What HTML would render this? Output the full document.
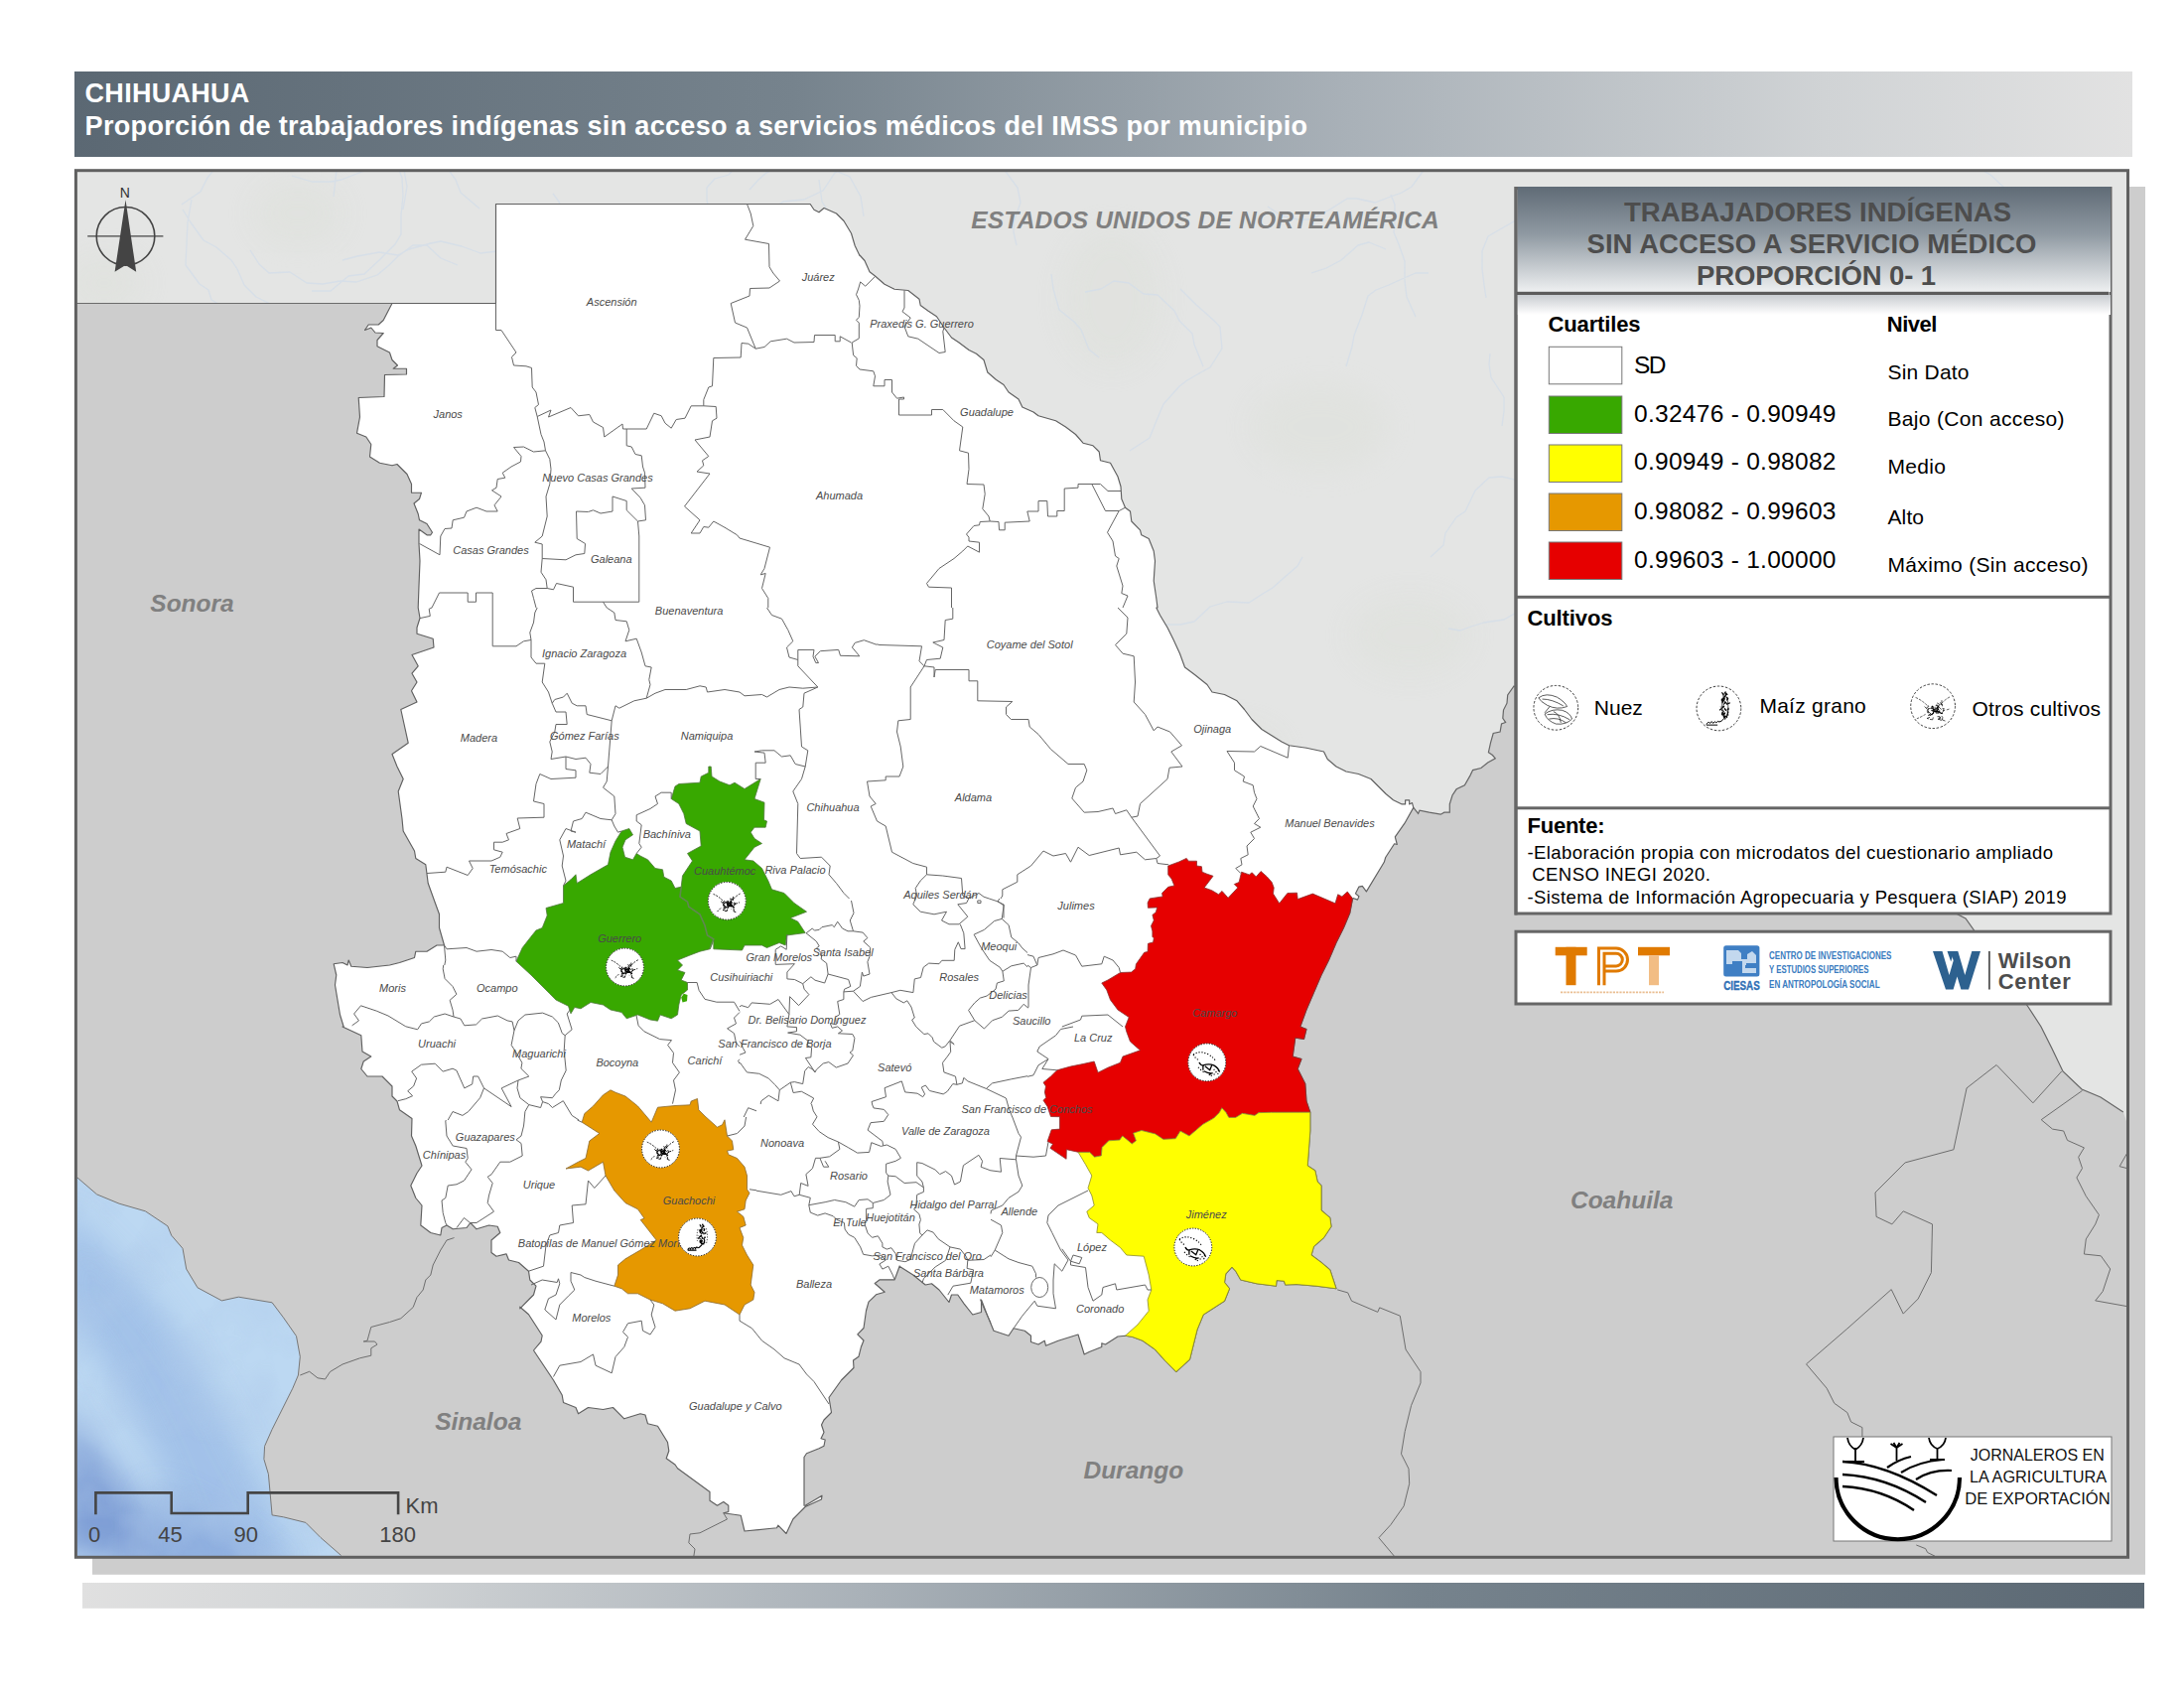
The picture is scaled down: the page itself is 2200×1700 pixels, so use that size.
<!DOCTYPE html><html><head><meta charset="utf-8"><title>Chihuahua</title>
<style>html,body{margin:0;padding:0;background:#fff}svg{display:block}text{font-family:"Liberation Sans",sans-serif}</style></head><body>
<svg width="2200" height="1700" viewBox="0 0 2200 1700">
<defs>
<linearGradient id="gh" x1="0" x2="1" y1="0" y2="0"><stop offset="0" stop-color="#5b6873"/><stop offset="0.35" stop-color="#76838d"/><stop offset="0.62" stop-color="#a9b1b8"/><stop offset="0.85" stop-color="#d0d3d5"/><stop offset="1" stop-color="#e2e2e2"/></linearGradient>
<linearGradient id="gf" x1="0" x2="1" y1="0" y2="0"><stop offset="0" stop-color="#e0e0e0"/><stop offset="0.15" stop-color="#d0d3d5"/><stop offset="0.38" stop-color="#a9b1b8"/><stop offset="0.65" stop-color="#76838d"/><stop offset="1" stop-color="#5b6873"/></linearGradient>
<linearGradient id="gl" x1="0" x2="0" y1="0" y2="1"><stop offset="0" stop-color="#5f6b76"/><stop offset="0.45" stop-color="#8f99a2"/><stop offset="1" stop-color="#eef0f1"/></linearGradient>
<linearGradient id="gl2" x1="0" x2="0" y1="0" y2="1"><stop offset="0" stop-color="#c9cdd1"/><stop offset="1" stop-color="#ffffff"/></linearGradient>
<radialGradient id="go" cx="0" cy="1" r="1" gradientUnits="objectBoundingBox"><stop offset="0" stop-color="#7d9fd0"/><stop offset="0.35" stop-color="#9dbde3"/><stop offset="0.75" stop-color="#b9d6f0"/><stop offset="1" stop-color="#c3dcf2"/></radialGradient>
<clipPath id="cm"><rect x="76" y="171" width="2068" height="1397"/></clipPath>
</defs>
<rect width="2200" height="1700" fill="#fff"/>
<rect x="75" y="72" width="2073" height="86" fill="url(#gh)"/>
<text x="85.6" y="103.3" font-size="27" font-weight="bold" fill="#fff" textLength="165.7" lengthAdjust="spacing">CHIHUAHUA</text>
<text x="85.6" y="136" font-size="27" font-weight="bold" fill="#fff" textLength="1231.4" lengthAdjust="spacing">Proporción de trabajadores indígenas sin acceso a servicios médicos del IMSS por municipio</text>
<rect x="93" y="188" width="2068" height="1397.8" fill="#cdcdcd"/>
<rect x="83" y="1594" width="2077" height="25.8" fill="url(#gf)"/>
<g clip-path="url(#cm)">
<rect x="76" y="171" width="2068" height="1397" fill="#cdcdcd"/>
<clipPath id="cus"><path d="M76 171 L2144 171 L2144 1135 L2138.8 1120 L2116 1105 L2097 1097 L2078 1079 L2067 1056 L2056 1034 L2043 1014 L1980 925 L1525 691 L1518.7 700 L1518 708.2 L1514.5 715.1 L1513.8 723.4 L1516.6 727.5 L1512.5 728.9 L1511.1 737.1 L1504.2 738.5 L1501.5 748.1 L1499.4 757.7 L1503.5 760.5 L1506.3 763.9 L1498.7 768 L1491.9 773.5 L1483.6 775.6 L1480.9 781.1 L1475.4 790.7 L1467.1 794.8 L1463 801 L1460.3 809.9 L1460.3 818.2 L1454.8 818.2 L1451.3 820.2 L1439.6 818.2 L1430 816.1 L1428.6 819.3 L1423.8 813.4 L1423.8 813.4 L1422.5 808.6 L1419.7 809.9 L1419.7 805.8 L1415.6 805.8 L1415.6 809.9 L1412.2 809.9 L1403.5 805.8 L1396 799.5 L1388.5 792 L1381 784.5 L1368.5 779.5 L1356 777 L1346 772 L1337.2 764.5 L1333.5 757 L1316 753.2 L1298.5 750.8 L1291 747 L1281 740.8 L1271 734.5 L1261 724.5 L1253.5 714.5 L1246 705.8 L1233.5 699.5 L1221 697 L1216 689.5 L1203.5 679.5 L1193.5 672 L1188.5 658.2 L1182.2 644.5 L1176 632 L1168.5 619.5 L1164.8 612 L1166 612 L1164.8 602.5 L1162.2 585 L1163.5 565 L1162.2 555 L1157.2 542.5 L1149.8 538.8 L1148.5 533.8 L1139.8 525 L1138.5 515 L1133.5 511.2 L1129.8 502.5 L1129 490 L1126 480 L1118.5 466.2 L1108.5 463.8 L1107.2 455 L1101 448.8 L1091 446.2 L1083.5 437.5 L1073.5 430 L1063.5 423.8 L1046 418.8 L1041 415 L1029.8 410 L1026 402 L1016 395 L1011 387.5 L1003.5 382.5 L994.8 375 L991 362.5 L983.5 356.2 L976 352.5 L966 345 L958.5 340 L951 330 L943.5 318.8 L934.8 313 L927.2 307.5 L926 301.2 L914.8 292.5 L901 291.2 L891 286.2 L881.5 278 L876 273.8 L871 262.5 L866 257 L866 257.5 L861.2 247.5 L857.5 235 L850 222.5 L842.5 215 L830 209.5 L825 213.8 L820 211.2 L816.2 205.5 L499.5 205.5 L499.5 305.5 L76 305.5Z"/></clipPath><clipPath id="coc"><path d="M76 1186 L78 1186 L97.6 1202.9 L120.1 1212.2 L146.4 1219.8 L168.9 1234.8 L172.7 1244.2 L184 1257.3 L187.7 1278 L199 1296.8 L223.4 1309.9 L240.3 1306.2 L274.1 1311.8 L285.4 1326.8 L298.5 1345.6 L302.3 1366.3 L300.4 1385 L294.8 1398.2 L285.4 1417 L274.1 1439.5 L266.6 1456.4 L265.9 1469.6 L270.4 1484.6 L274.1 1525.9 L285.4 1527.8 L307.9 1533.4 L323 1548.5 L343.6 1566.5 L344 1568 L76 1568Z"/></clipPath>
<path d="M76 171 L2144 171 L2144 1135 L2138.8 1120 L2116 1105 L2097 1097 L2078 1079 L2067 1056 L2056 1034 L2043 1014 L1980 925 L1525 691 L1518.7 700 L1518 708.2 L1514.5 715.1 L1513.8 723.4 L1516.6 727.5 L1512.5 728.9 L1511.1 737.1 L1504.2 738.5 L1501.5 748.1 L1499.4 757.7 L1503.5 760.5 L1506.3 763.9 L1498.7 768 L1491.9 773.5 L1483.6 775.6 L1480.9 781.1 L1475.4 790.7 L1467.1 794.8 L1463 801 L1460.3 809.9 L1460.3 818.2 L1454.8 818.2 L1451.3 820.2 L1439.6 818.2 L1430 816.1 L1428.6 819.3 L1423.8 813.4 L1423.8 813.4 L1422.5 808.6 L1419.7 809.9 L1419.7 805.8 L1415.6 805.8 L1415.6 809.9 L1412.2 809.9 L1403.5 805.8 L1396 799.5 L1388.5 792 L1381 784.5 L1368.5 779.5 L1356 777 L1346 772 L1337.2 764.5 L1333.5 757 L1316 753.2 L1298.5 750.8 L1291 747 L1281 740.8 L1271 734.5 L1261 724.5 L1253.5 714.5 L1246 705.8 L1233.5 699.5 L1221 697 L1216 689.5 L1203.5 679.5 L1193.5 672 L1188.5 658.2 L1182.2 644.5 L1176 632 L1168.5 619.5 L1164.8 612 L1166 612 L1164.8 602.5 L1162.2 585 L1163.5 565 L1162.2 555 L1157.2 542.5 L1149.8 538.8 L1148.5 533.8 L1139.8 525 L1138.5 515 L1133.5 511.2 L1129.8 502.5 L1129 490 L1126 480 L1118.5 466.2 L1108.5 463.8 L1107.2 455 L1101 448.8 L1091 446.2 L1083.5 437.5 L1073.5 430 L1063.5 423.8 L1046 418.8 L1041 415 L1029.8 410 L1026 402 L1016 395 L1011 387.5 L1003.5 382.5 L994.8 375 L991 362.5 L983.5 356.2 L976 352.5 L966 345 L958.5 340 L951 330 L943.5 318.8 L934.8 313 L927.2 307.5 L926 301.2 L914.8 292.5 L901 291.2 L891 286.2 L881.5 278 L876 273.8 L871 262.5 L866 257 L866 257.5 L861.2 247.5 L857.5 235 L850 222.5 L842.5 215 L830 209.5 L825 213.8 L820 211.2 L816.2 205.5 L499.5 205.5 L499.5 305.5 L76 305.5Z" fill="#e4e5e4"/>
<g clip-path="url(#cus)">
<filter id="bl" x="-50%" y="-50%" width="200%" height="200%"><feGaussianBlur stdDeviation="14"/></filter>
<ellipse cx="300" cy="215" rx="45" ry="35" fill="#dcdfd8" opacity=".4" filter="url(#bl)"/>
<ellipse cx="105" cy="285" rx="40" ry="30" fill="#dcdfd8" opacity=".4" filter="url(#bl)"/>
<ellipse cx="1330" cy="430" rx="70" ry="45" fill="#dcdfd8" opacity=".4" filter="url(#bl)"/>
<ellipse cx="1420" cy="640" rx="60" ry="40" fill="#dcdfd8" opacity=".4" filter="url(#bl)"/>
<ellipse cx="1120" cy="300" rx="50" ry="70" fill="#dcdfd8" opacity=".4" filter="url(#bl)"/>
<ellipse cx="1640" cy="330" rx="60" ry="40" fill="#dcdfd8" opacity=".4" filter="url(#bl)"/>
<ellipse cx="1250" cy="760" rx="40" ry="30" fill="#dcdfd8" opacity=".4" filter="url(#bl)"/>
<path d="M1401 196 L1405 206 L1405 224 L1404 234 L1409 246 L1415 263 L1415 283 L1417 299 L1426 319 M1646 307 L1632 326 L1628 337 L1632 358 L1633 379 L1629 396 L1616 405 L1598 417 L1578 425 L1558 431 M184 211 L192 224 L205 242 L218 249 L233 262 L239 271 L246 287 L258 299 L278 309 M1501 356 L1500 367 L1502 380 L1515 400 L1515 414 L1513 429 M1965 554 L1957 569 L1946 581 L1934 590 L1922 590 L1902 590 L1891 584 L1872 583 L1857 580 M1312 561 L1307 570 L1292 583 L1282 592 L1272 598 L1258 607 L1236 606 L1219 611 L1203 626 L1189 629 L1170 629 L1152 639 L1133 648 L1124 652 M755 191 L764 181 L772 174 L792 166 L809 171 L827 166 L839 171 L856 178 L867 198 L870 218 M1552 504 L1542 490 L1530 484 L1513 480 L1500 481 L1486 494 L1476 515 L1467 521 L1456 537 L1454 549 L1441 561 M1059 276 L1061 291 L1067 312 L1082 324 L1089 332 L1097 352 L1107 360 M1189 291 L1205 307 L1222 322 L1229 329 L1231 351 L1219 370 L1208 376 L1196 383 L1188 389 L1172 407 L1164 426 L1158 441 L1138 454 M1229 768 L1238 774 L1245 782 L1254 789 L1272 802 L1281 808 L1298 822 L1309 823 L1322 831 L1329 848 M1277 208 L1289 216 L1307 221 L1321 221 L1338 212 L1357 200 L1367 200 L1385 204 L1401 198 L1412 194 L1422 188 L1430 177 L1440 163 L1447 140 L1459 127 M1459 633 L1471 635 L1482 631 L1495 627 L1515 624 L1531 615 L1542 602 M1946 873 L1951 882 L1959 891 L1961 903 L1964 923 L1965 934 L1955 951 L1955 961 L1957 979 L1959 989 L1969 1010 L1967 1021 M824 258 L809 264 L797 267 L777 258 L766 240 L766 229 L771 216 L789 203 L810 201 L829 192 L841 174 L853 168 L869 167 L889 161 M557 195 L563 203 L568 217 L573 236 L570 251 L579 271 L592 283 L593 294 L593 309 L586 323 L576 329 M1934 332 L1955 322 L1974 315 L1993 315 L2004 312 L2018 313 L2040 307 L2054 308 L2069 305 L2083 300 L2093 288 L2112 283 M1941 683 L1931 693 L1923 712 L1915 725 L1907 742 L1898 761 L1879 770 L1866 774 L1847 774 L1828 787 L1819 798 L1809 804 L1799 826 L1788 844 M1024 247 L1021 234 L1021 224 L1028 204 L1025 189 L1011 170 L1005 161 L987 149 L969 138 L952 121 L938 103 L936 84 M1565 591 L1570 580 L1583 571 L1604 565 L1621 553 L1632 545 L1647 532 L1654 519 L1664 514 L1672 501 L1673 488 L1672 473 L1671 463 L1677 448 M1668 956 L1678 955 L1698 950 L1721 956 L1741 958 L1759 962 L1772 959 L1782 956 L1799 947 L1809 939 L1818 932 L1827 926 L1841 915 L1845 897 L1841 881 M193 201 L189 224 L188 246 L187 267 L201 286 L210 292 L213 302 L225 309 L234 325 L247 335 L270 338 L284 339 M846 295 L851 285 L848 271 L849 248 L847 228 L834 213 L828 203 L825 181 M1321 275 L1336 270 L1351 262 L1368 247 L1379 244 L1396 251 M1789 759 L1775 755 L1762 744 L1749 734 L1741 723 L1739 701 L1725 684 L1711 676 L1699 666 L1677 665 L1665 671 L1651 671 L1634 661 L1624 658 M2034 246 L2032 232 L2029 213 L2027 203 L2019 189 L2005 176 L1989 167 L1967 160 L1953 155 L1939 150 L1919 152 L1900 158 L1881 152 M483 210 L464 194 L459 181 L451 170 L447 158 L439 152 L417 144 L399 134 L389 134 L373 140 L353 152 L339 170 L338 180 L336 198 M1497 300 L1495 287 L1493 271 L1493 253 L1499 238 L1511 231 L1525 223 L1535 219 L1546 222 L1561 234 M633 242 L639 250 L651 264 L662 271 L675 285 L689 299 L694 320 L694 339 L685 352 L674 367 L654 375 L647 385 L640 404 L634 417 M345 262 L360 258 L382 254 L401 257 L412 251 L434 245 L444 243 L465 248 L484 255 L501 253 L515 251 L529 258 L543 278 L553 290 M748 261 L752 275 L745 295 L739 310 L737 324 L725 335 L708 351 L693 360 L683 368 L669 383 L653 396 L644 412 M1992 536 L1976 526 L1965 509 L1958 502 L1947 495 L1942 485 L1944 466 M406 211 L410 188 L407 171 L400 149 L393 128 L395 114 L404 101 L420 95 L434 96 L452 92 L467 100 L484 101 M798 243 L774 237 L759 239 L745 234 L728 232 L716 222 L712 201 L712 189 L720 180 L734 176 L749 160 M294 177 L314 183 L333 183 L344 181 L362 174 L384 165 L406 161 L423 158 M1356 369 L1362 349 L1364 338 L1372 317 L1378 298 L1386 292 L1399 287 L1410 282 L1426 275 L1439 275 M252 252 L261 266 L271 275 L292 274 L309 285 L325 286 L343 283 L359 284 L380 277 L392 267 L401 258 L416 247 L430 247 L444 260 L461 267 M1496 789 L1513 802 L1520 822 L1535 838 L1546 843 L1566 845 L1584 854 L1595 854 L1606 855 L1615 860 L1626 865 L1635 876 L1643 886 L1651 906 L1660 921 M649 289 L663 289 L684 277 L695 257 L713 246 L736 249 L749 257 L755 266 L763 279 L769 298 M1288 853 L1305 851 L1328 852 L1346 848 L1365 848 L1385 848 L1396 849 M183 206 L202 193 L209 179 L222 163 L238 159 L250 161 L261 161 M1093 294 L1109 291 L1122 283 L1137 285 L1152 296 L1166 297 L1183 313 L1188 323 L1201 336 L1203 347 L1212 369 M1703 344 L1704 331 L1713 319 L1715 297 L1703 278 L1693 273 L1681 271 L1671 267 L1651 274 L1640 283 L1635 293 L1623 305 L1608 312 L1591 313 M314 293 L333 293 L351 278 L367 276 L382 262 L398 246 L404 236 L404 217 L406 197 L405 179 L399 163 L390 143 L375 133 L367 117 M1864 530 L1874 517 L1880 507 L1888 489 L1891 478 L1899 470 L1910 467 L1923 452 L1940 445 L1957 440 L1967 435 L1982 422 M1628 891 L1627 876 L1628 863 L1632 851 L1626 830 L1617 811 L1610 791 L1614 768 L1624 752 L1631 745" fill="none" stroke="#d3dde8" stroke-width="1.3" stroke-linejoin="round" opacity=".8"/>
</g>
<path d="M76 1186 L78 1186 L97.6 1202.9 L120.1 1212.2 L146.4 1219.8 L168.9 1234.8 L172.7 1244.2 L184 1257.3 L187.7 1278 L199 1296.8 L223.4 1309.9 L240.3 1306.2 L274.1 1311.8 L285.4 1326.8 L298.5 1345.6 L302.3 1366.3 L300.4 1385 L294.8 1398.2 L285.4 1417 L274.1 1439.5 L266.6 1456.4 L265.9 1469.6 L270.4 1484.6 L274.1 1525.9 L285.4 1527.8 L307.9 1533.4 L323 1548.5 L343.6 1566.5 L344 1568 L76 1568Z" fill="#bcd8f2"/>
<g clip-path="url(#coc)"><filter id="bo" x="-50%" y="-50%" width="200%" height="200%"><feGaussianBlur stdDeviation="16"/></filter>
<path d="M60 1560 L60 1420 Q120 1480 200 1600 Z" fill="#7f9fd6" filter="url(#bo)"/>
<path d="M60 1215 Q150 1290 210 1400 Q260 1480 300 1580 L200 1590 Q170 1480 120 1400 Q90 1340 60 1320Z" fill="#9bbce6" opacity=".8" filter="url(#bo)"/>
<path d="M150 1500 Q220 1520 290 1590 L150 1590Z" fill="#88a9dc" opacity=".8" filter="url(#bo)"/>
<filter id="tb" x="0" y="0" width="100%" height="100%"><feTurbulence type="fractalNoise" baseFrequency="0.018" numOctaves="3" seed="5"/><feColorMatrix type="matrix" values="0 0 0 0 0.42  0 0 0 0 0.58  0 0 0 0 0.82  0 0 0 1.6 -0.62"/></filter>
<rect x="76" y="1180" width="280" height="390" filter="url(#tb)" opacity=".55"/>
</g>
<path d="M78 1186 L97.6 1202.9 L120.1 1212.2 L146.4 1219.8 L168.9 1234.8 L172.7 1244.2 L184 1257.3 L187.7 1278 L199 1296.8 L223.4 1309.9 L240.3 1306.2 L274.1 1311.8 L285.4 1326.8 L298.5 1345.6 L302.3 1366.3 L300.4 1385 L294.8 1398.2 L285.4 1417 L274.1 1439.5 L266.6 1456.4 L265.9 1469.6 L270.4 1484.6 L274.1 1525.9 L285.4 1527.8 L307.9 1533.4 L323 1548.5 L343.6 1566.5" fill="none" stroke="#777" stroke-width="1"/>
<path d="M76 305.5 H395" fill="none" stroke="#6b6b6b" stroke-width="1.2"/>
<path d="M2138.8 1120 L2116 1105 L2097 1097 L2078 1079 L2067 1056 L2056 1034 L2043 1014 L1980 925 L1525 691 L1518.7 700 L1518 708.2 L1514.5 715.1 L1513.8 723.4 L1516.6 727.5 L1512.5 728.9 L1511.1 737.1 L1504.2 738.5 L1501.5 748.1 L1499.4 757.7 L1503.5 760.5 L1506.3 763.9 L1498.7 768 L1491.9 773.5 L1483.6 775.6 L1480.9 781.1 L1475.4 790.7 L1467.1 794.8 L1463 801 L1460.3 809.9 L1460.3 818.2 L1454.8 818.2 L1451.3 820.2 L1439.6 818.2 L1430 816.1 L1428.6 819.3 L1423.8 813.4" fill="none" stroke="#666" stroke-width="1.2"/>
<path d="M457.5 1246.5 L456.2 1247 L450 1249 L443.8 1259 L436.2 1274 L433.8 1284 L428.8 1289 L426.2 1299 L420 1306.5 L416.2 1316.5 L403.8 1327.8 L392.5 1331.5 L373.8 1336.5 L370 1350.2 L366.2 1351 L377.5 1351 L380 1354 L373.8 1357.8 L373.8 1365.2 L362.5 1367.8 L345 1374 L332.5 1381.5 L327.5 1389 L320 1387.8 L311.7 1381.3 L302.3 1385" fill="none" stroke="#6e6e6e" stroke-width="1"/>
<path d="M728.8 1523.8 L732.5 1530 L705 1543.8 L695 1545 L693.8 1553.8 L700 1560 L698.8 1567.5" fill="none" stroke="#6e6e6e" stroke-width="1"/>
<path d="M1347.2 1298.9 L1357.7 1301.9 L1361.5 1310.2 L1387.8 1321.4 L1389.7 1316.9 L1410.3 1325.2 L1416 1359 L1431 1381.6 L1431 1392.8 L1421.6 1415.4 L1415.2 1441.7 L1411.5 1464.2 L1419 1479.2 L1419.7 1494.2 L1414.1 1516.8 L1400.9 1535.6 L1388.9 1548.7 L1404.7 1567.5" fill="none" stroke="#6e6e6e" stroke-width="1"/>
<path d="M2076.8 1078.9 L2047.9 1110.8 L2011.1 1072.5 L1981.1 1095.8 L1967.9 1157.8 L1919.1 1170.9 L1889 1201 L1890.1 1225.4 L1905.9 1232.9 L1917.2 1219.8 L1946.5 1232.9 L1945.4 1281.7 L1932.2 1308 L1917.2 1323.1 L1905.2 1298.6 L1860.8 1338.1 L1819.5 1373.8 L1840.2 1398.2 L1847.7 1413.2 L1860.8 1422.6 L1864.6 1432 L1875.9 1437.6 L1875.9 1447" fill="none" stroke="#6e6e6e" stroke-width="1"/>
<path d="M2097.5 1098.4 L2056.2 1127.7 L2067.5 1137.1 L2078.7 1139 L2082.5 1148.4 L2099.4 1155.9 L2093.7 1165.3 L2097.5 1176.6 L2091.9 1186 L2101.3 1204.7 L2114.4 1223.5 L2110.7 1232.9 L2101.3 1247.9 L2099.4 1263 L2116.3 1264.8 L2125.7 1278 L2118.2 1300.5 L2110.7 1309.9 L2142.6 1315.6" fill="none" stroke="#6e6e6e" stroke-width="1"/>
<path d="M2142.6 1161.5 L2135.1 1174.7 L2142.6 1176.6" fill="none" stroke="#6e6e6e" stroke-width="1"/>
<path d="M1930.3 1556 L1939.7 1559.7 L1941.6 1563.5 L1949.1 1567.2" fill="none" stroke="#6e6e6e" stroke-width="1"/>
<path d="M499.5 205.5 L816.2 205.5 L820 211.2 L825 213.8 L830 209.5 L842.5 215 L850 222.5 L857.5 235 L861.2 247.5 L866 257.5 L866 257 L871 262.5 L876 273.8 L881.5 278 L891 286.2 L901 291.2 L914.8 292.5 L926 301.2 L927.2 307.5 L934.8 313 L943.5 318.8 L951 330 L958.5 340 L966 345 L976 352.5 L983.5 356.2 L991 362.5 L994.8 375 L1003.5 382.5 L1011 387.5 L1016 395 L1026 402 L1029.8 410 L1041 415 L1046 418.8 L1063.5 423.8 L1073.5 430 L1083.5 437.5 L1091 446.2 L1101 448.8 L1107.2 455 L1108.5 463.8 L1118.5 466.2 L1126 480 L1129 490 L1129.8 502.5 L1133.5 511.2 L1138.5 515 L1139.8 525 L1148.5 533.8 L1149.8 538.8 L1157.2 542.5 L1162.2 555 L1163.5 565 L1162.2 585 L1164.8 602.5 L1166 612 L1164.8 612 L1168.5 619.5 L1176 632 L1182.2 644.5 L1188.5 658.2 L1193.5 672 L1203.5 679.5 L1216 689.5 L1221 697 L1233.5 699.5 L1246 705.8 L1253.5 714.5 L1261 724.5 L1271 734.5 L1281 740.8 L1291 747 L1298.5 750.8 L1316 753.2 L1333.5 757 L1337.2 764.5 L1346 772 L1356 777 L1368.5 779.5 L1381 784.5 L1388.5 792 L1396 799.5 L1403.5 805.8 L1412.2 809.9 L1415.6 809.9 L1415.6 805.8 L1419.7 805.8 L1419.7 809.9 L1422.5 808.6 L1423.8 813.4 L1414.9 829.2 L1405.3 842.9 L1407.3 850.5 L1404.6 849.8 L1395.7 863.5 L1394.3 868.3 L1376.4 897.9 L1372.3 892.4 L1368.9 893.1 L1365.4 899.9 L1368.9 902.7 L1367.5 906.1 L1363 904.5 L1362.2 907 L1359.8 919.5 L1353.5 934.5 L1346 949.5 L1338.5 967 L1331 982 L1323.5 999.5 L1316 1017 L1309.8 1034 L1316 1036.5 L1313.5 1046.5 L1304.8 1045.2 L1302.2 1064 L1311 1066.5 L1307.2 1076.5 L1314.8 1091.5 L1316 1109 L1319.8 1120.2 L1319.8 1139 L1317.2 1174 L1324.8 1179 L1327.2 1190.2 L1331 1194 L1331 1219 L1339.8 1226.5 L1341 1235.2 L1333.5 1246.5 L1323.5 1255.2 L1321 1264 L1331 1271.5 L1339.8 1279 L1346 1297.8 L1326 1295.2 L1306 1293.5 L1294.8 1294 L1293.5 1290.2 L1286 1289.5 L1285.5 1295.2 L1266 1292.8 L1249.8 1289 L1244.8 1280.2 L1241 1276 L1234.8 1282.8 L1233.5 1291.5 L1238.5 1297.8 L1233.5 1310.2 L1212.2 1324 L1206 1339 L1198.5 1369 L1184.8 1381.5 L1173.5 1370.2 L1163.5 1359 L1151 1350.2 L1141 1346.5 L1133.5 1345.2 L1126 1346 L1113.5 1354 L1109.8 1352.8 L1109.8 1356.5 L1097.2 1361.5 L1092.2 1364 L1086 1344 L1066 1350.2 L1053.5 1355.2 L1052.2 1350.2 L1046 1354 L1038.5 1351.5 L1038.5 1345.2 L1032.2 1340.2 L1021 1337.8 L1016 1345.2 L1001 1340.2 L994.8 1325.2 L988.5 1309 L988.5 1321.5 L979.8 1324 L971 1312.8 L964.8 1304 L958.5 1304 L956 1311.5 L946 1299 L938.5 1292.8 L932.2 1294 L919.8 1284 L906 1275.2 L906.2 1275 L901.2 1288.8 L886.2 1288.8 L881.2 1292.5 L891.2 1301.2 L882.5 1303.8 L875 1311.2 L872.5 1320 L870 1337.5 L863.8 1343.8 L870 1350 L867.5 1356.2 L865 1366.2 L859.5 1370 L860 1377.5 L847.5 1390 L835 1407.5 L837.5 1422.5 L830 1430 L827.5 1435 L830 1442.5 L827 1448.8 L831.2 1450 L830 1456.2 L825 1458.8 L812.5 1463.8 L810 1467.5 L810 1516.2 L811.2 1516.2 L828 1506.2 L827.5 1510 L811.2 1517.5 L798.8 1530 L792 1544.5 L783.8 1536.2 L782.5 1538.8 L775 1539.5 L750 1542 L746.2 1526.2 L728.8 1523.8 L733.8 1522.5 L733.8 1516.2 L728.8 1512.5 L722.5 1516.2 L715 1511.2 L715 1502.5 L682.5 1478.8 L680 1475 L671.2 1468.8 L673.8 1461.2 L672.5 1452.5 L662.5 1436.2 L652.5 1433.8 L650 1425 L645 1423.8 L628.8 1428.8 L617.5 1417.5 L607.5 1419.5 L592.5 1417.5 L582.5 1423.8 L580 1417.5 L567.5 1412.5 L566.2 1405 L557.5 1390 L537.5 1360 L545 1351.2 L546.2 1345 L532.5 1323.8 L523.8 1316.2 L523.8 1317.8 L532.5 1309 L537.5 1304 L540 1295.2 L533.8 1289 L532.5 1280.2 L522.5 1271.5 L512.5 1269 L510 1262.8 L500 1265.2 L495 1261.5 L495 1249 L503.8 1241.5 L501.2 1235.2 L492.5 1234 L480 1237.8 L473.8 1231.5 L470 1236.5 L456.2 1237.8 L450 1234 L445 1236.5 L443.8 1244 L433.8 1241.5 L423.8 1234 L425 1214 L418.8 1206.5 L413.8 1194 L420 1181.5 L425 1174 L418.8 1154 L414.5 1144 L415 1126.5 L402.5 1117.8 L400 1109 L395 1104 L395 1094 L385 1084 L370 1084 L363.8 1076.5 L366.2 1069 L373.8 1064 L365 1059 L363.8 1042.8 L345 1034 L346.2 1034 L342.5 1022 L340 1007 L337.5 992 L338.8 982 L336.2 970.8 L345 969.5 L350 972 L351.2 967 L353.8 973.2 L370 974.5 L392.5 972 L402.5 969.5 L417.5 964.5 L418.8 958.2 L430 958.2 L440 952 L447.5 952 L442.5 934.5 L442.5 920.8 L437.5 907 L431.2 889.5 L428.8 870.8 L418.8 864.5 L417.5 857 L406.2 837 L405 824.5 L401.2 797 L406.2 784.5 L400 772 L395 759.5 L411.2 748.2 L403.8 714.5 L420 707 L414.5 695.8 L420 687 L415 678.2 L421.2 670.8 L415 659.5 L437 652 L436.2 643.2 L420 638.2 L420 632 L423 622.5 L421.2 612 L421.2 612 L422 590 L423 565 L422 547.5 L422 533 L430 538.8 L433.8 538.8 L435.5 536.2 L430 527.5 L422.5 523.8 L421.2 517.5 L417 507 L422.5 502.5 L424.5 496.2 L414.5 496.2 L414.5 487.5 L410 477.5 L400 467.5 L395 468.8 L382.5 466.2 L372.5 460 L373.8 447.5 L368.8 440 L359.5 436.2 L362.5 420 L361.2 400.5 L387 399.5 L387.5 377.5 L409.5 377 L409.5 371.2 L396.2 371.2 L400.5 368 L395 362.5 L392.5 355 L380 348.8 L380 342.5 L386.2 335.5 L378 335 L373.8 330 L367.5 332.5 L371.2 327 L381.2 327 L386.2 322.5 L395 305.5 L499.5 305.5Z" fill="#fff" stroke="#606060" stroke-width="1.15" stroke-linejoin="round"/>
<path d="M1176.7 872 L1187.7 867.9 L1195.2 864.4 L1197.3 867.2 L1205.5 867.2 L1205.5 872 L1210.4 872.7 L1211 878.2 L1215.9 880.2 L1222 882.3 L1213.1 894 L1220.7 896.7 L1227.5 900.8 L1231 897.4 L1237.1 904.3 L1246.8 894 L1243.3 890.5 L1248.1 888.5 L1250.6 878.2 L1258.4 880.9 L1261.2 878.8 L1265.3 883 L1270.1 877.5 L1276.3 883 L1281.1 888.5 L1283.2 894 L1282.5 900.1 L1288.7 909.8 L1296.9 899.5 L1306.5 899.2 L1307.2 905.6 L1322.3 900.1 L1345 909.8 L1347.7 900.8 L1351.8 902.9 L1357.3 898.1 L1362.1 904.3 L1362.2 907 L1359.8 919.5 L1353.5 934.5 L1346 949.5 L1338.5 967 L1331 982 L1323.5 999.5 L1316 1017 L1309.8 1034 L1316 1036.5 L1313.5 1046.5 L1304.8 1045.2 L1302.2 1064 L1311 1066.5 L1307.2 1076.5 L1314.8 1091.5 L1316 1109 L1319.8 1120.2 L1280.4 1120.3 L1268 1120.6 L1263.9 1123.4 L1251.5 1121.3 L1244.7 1125.4 L1237.8 1125.4 L1235.1 1120.6 L1230.9 1115.8 L1228.2 1120.6 L1222.7 1126.1 L1211.7 1132.3 L1198 1144 L1189 1139.1 L1184.2 1146.7 L1171.9 1147.4 L1163.6 1141.9 L1149.9 1138.5 L1141.6 1141.2 L1144.4 1148.8 L1140.3 1151.9 L1130.7 1144 L1127.9 1148.1 L1116.9 1148.8 L1110.1 1155.6 L1109.4 1163.9 L1102.5 1165.2 L1097.7 1160.4 L1086.7 1160.4 L1074.3 1157.7 L1074.1 1167.3 L1057.9 1156.3 L1060.6 1152.2 L1055.1 1149.5 L1059.2 1137.8 L1067.5 1137.1 L1067.5 1124.7 L1058.5 1124.5 L1055.1 1114.4 L1051 1108.2 L1053.7 1105.5 L1052.4 1100 L1053.5 1094 L1051 1090.2 L1058.5 1084 L1064.8 1077.8 L1078.5 1074 L1091 1071.5 L1102.2 1069 L1106 1080.2 L1116 1075.2 L1128.5 1070.2 L1131 1064 L1148.5 1057.8 L1138.5 1049 L1134.8 1039 L1133.5 1034 L1137.2 1024.5 L1126 1017 L1118.5 1007 L1114.8 997 L1109.8 990 L1116 987 L1128.5 979.5 L1139.6 979.1 L1143.7 975.7 L1144.4 970.9 L1152.7 959.2 L1156.1 958.5 L1156.4 950.3 L1161.6 948.9 L1162.3 944.8 L1160.9 943.4 L1160.9 937.9 L1159.5 932.4 L1162.3 926.9 L1160.9 921.4 L1164.3 918.7 L1165.7 913.9 L1156.4 914.3 L1156.1 909.1 L1158.2 904.9 L1171.2 902.9 L1170.5 899.5 L1176.7 893.3 L1182.9 891.9 L1180.1 885 L1176.7 880.9Z" fill="#e60000" stroke="#8a3030" stroke-width="0.8"/>
<path d="M1319.8 1120.2 L1319.8 1139 L1317.2 1174 L1324.8 1179 L1327.2 1190.2 L1331 1194 L1331 1219 L1339.8 1226.5 L1341 1235.2 L1333.5 1246.5 L1323.5 1255.2 L1321 1264 L1331 1271.5 L1339.8 1279 L1346 1297.8 L1326 1295.2 L1306 1293.5 L1294.8 1294 L1293.5 1290.2 L1286 1289.5 L1285.5 1295.2 L1266 1292.8 L1249.8 1289 L1244.8 1280.2 L1241 1276 L1234.8 1282.8 L1233.5 1291.5 L1238.5 1297.8 L1233.5 1310.2 L1212.2 1324 L1206 1339 L1198.5 1369 L1184.8 1381.5 L1173.5 1370.2 L1163.5 1359 L1151 1350.2 L1141 1346.5 L1133.5 1345.2 L1146 1334 L1157.2 1320.2 L1156 1309 L1159.8 1299 L1157.2 1284 L1152.2 1265.2 L1134.8 1264 L1128.5 1256.5 L1118.5 1249 L1109.8 1241.5 L1104.8 1241.5 L1106 1232.8 L1097.2 1226.5 L1094.8 1220.2 L1102.2 1214 L1099.8 1204 L1096 1196.5 L1099.8 1184 L1093.5 1172.8 L1086 1160.2 L1086.7 1160.4 L1097.7 1160.4 L1102.5 1165.2 L1109.4 1163.9 L1110.1 1155.6 L1116.9 1148.8 L1127.9 1148.1 L1130.7 1144 L1140.3 1151.9 L1144.4 1148.8 L1141.6 1141.2 L1149.9 1138.5 L1163.6 1141.9 L1171.9 1147.4 L1184.2 1146.7 L1189 1139.1 L1198 1144 L1211.7 1132.3 L1222.7 1126.1 L1228.2 1120.6 L1230.9 1115.8 L1235.1 1120.6 L1237.8 1125.4 L1244.7 1125.4 L1251.5 1121.3 L1263.9 1123.4 L1268 1120.6 L1280.4 1120.3Z" fill="#ffff00" stroke="#8a8a30" stroke-width="0.8"/>
<path d="M626.2 837 L633.8 834.5 L637.5 840.8 L630 845.8 L627 853.2 L629.5 863.2 L637.5 865.8 L641.2 859.5 L645 862 L652.5 865.8 L660 874.5 L667.5 875.8 L668.8 883.2 L676.2 887 L680 894.5 L686.2 893.2 L685 903.2 L692.5 908.2 L693.8 913.2 L705 920.8 L710 932 L712.5 942 L718.8 945.8 L715 955.8 L705 958.2 L695 962 L682.5 967 L687.5 972 L682.5 977 L690 979.5 L686.2 987 L692.5 989.5 L692.5 997 L686.2 1002 L683.8 1012 L682.5 1022 L676.2 1025.8 L665 1022 L662.5 1028.2 L655 1027 L642.5 1022 L631.2 1025.8 L626.2 1019.5 L615 1017 L607.5 1012 L595 1009.5 L585 1015.8 L578.8 1014.5 L575 1020.8 L572.5 1013.2 L560 1007 L553.8 1000.8 L545 992 L535 982 L520 968.2 L526.2 954.5 L535 943.2 L540 937 L546.2 934.5 L551.2 922 L550 914.5 L567.5 909.5 L567.5 892 L575 885.8 L580 880.8 L581.2 889.5 L595 880.8 L612.5 870.8 L615 858.2 L620 847Z" fill="#38a800" stroke="#4e7a3a" stroke-width="0.8"/>
<path d="M688.8 1000.8 L692.5 1002 L692 1008.2 L687.5 1009.5 L686.2 1004.5Z" fill="#38a800"/>
<path d="M713.8 772 L716.2 772 L717 782 L725 787 L735 790.8 L740 788.2 L750 794.5 L766.2 784.5 L760 804.5 L770 808.2 L769.5 825.8 L772.5 827 L771.2 833.2 L760 833.2 L756.2 838.2 L760 844.5 L767.5 849.5 L760 853.2 L750 865.8 L758.8 867 L767.5 874.5 L773.8 887 L777.5 895.8 L790 899.5 L800 909.5 L812.5 918.2 L796.2 924.5 L803.8 928.2 L811.2 939.5 L792.5 942 L791.2 952 L785 949.5 L772.5 954.5 L767.5 952 L750 952 L747.5 957 L718.8 955.8 L718.8 945.8 L712.5 942 L710 932 L705 920.8 L693.8 913.2 L692.5 908.2 L685 903.2 L686.2 893.2 L687.5 882 L697.5 867 L692.5 859.5 L706.2 852 L705 837 L691.2 829.5 L688.8 819.5 L683.8 809.5 L676.2 804.5 L680 792 L683.8 789.5 L705 788.2 L706.2 782 L713.8 778.2Z" fill="#38a800" stroke="#4e7a3a" stroke-width="0.8"/>
<path d="M686.2 893.2 L685 903.2 L692.5 908.2 L693.8 913.2 L705 920.8 L710 932 L712.5 942 L718.8 945.8 L715 955.8" fill="none" stroke="#5f8a4e" stroke-width="1.6"/>
<path d="M615 1097.8 L620 1100.2 L630 1104 L642.5 1114 L656.2 1130.2 L662.5 1115.2 L680 1113.5 L695 1112.8 L696.2 1109 L702.5 1106.5 L703.8 1117.8 L710 1124 L722.5 1135.2 L727.5 1132.8 L730 1127.8 L732.5 1144 L737.5 1149 L738.8 1157.8 L732.5 1159 L733.8 1162.8 L742.5 1166.5 L750 1175.2 L752.5 1184 L752.5 1197.8 L755 1201.5 L751.2 1209 L750 1217.8 L742.5 1220.2 L748.8 1225.2 L751.2 1234 L745 1236.5 L748.8 1246.5 L747.5 1254 L752.5 1264 L758.8 1274 L756.2 1294 L760 1301.5 L758.8 1309 L750 1314 L745 1324 L730 1314 L710 1310.2 L695 1317.8 L680 1320.2 L667.5 1312.8 L655 1309 L642.5 1302.8 L632.5 1302.8 L626.2 1297.8 L618.8 1295.2 L622.5 1284 L622.5 1274 L630 1267.8 L645 1259 L661.2 1249 L645.2 1228.5 L649 1227 L642.5 1217.8 L630 1211.5 L618.8 1199 L610 1184 L607.5 1170.2 L592.5 1179 L585 1175.2 L570 1177 L582.5 1170.2 L590 1166.5 L593.8 1149 L603.8 1141.5 L586.2 1130.2 L588.8 1121.5 L597.5 1114 L607.5 1102.8Z" fill="#e69800" stroke="#8a6a30" stroke-width="0.8"/>
<path d="M499.5 305.5 L499.5 332.5 L505 332.5 L520 355 L515.5 359.5 L517.5 368 L530 368.8 L535.5 370.5 L536.2 390 L540 395 L542.5 407.5 L538.8 410.5 L541.2 419.5 M541.2 419.5 L555 413 L552.5 420 L575 410.5 L582.5 418.8 L593.8 417.5 L597.5 425 L607.5 430.5 L608.8 440 L627 427 L627.5 432 L651.2 432 L658.8 416.2 L666.2 418.8 L670 426.2 L676.2 431.2 L681.2 422.5 L690 421.2 L696.2 408.8 L708.8 408.8 L708.8 402.5 L713.8 390 L717.5 388.8 L718.8 360.5 L746.2 360 L747 345.5 L753.8 346.2 L761.2 351.2 L752.5 330 L740.5 325 L736.2 305.5 L755 298 L755.5 290.5 L775 290 L785.5 283 L778.8 275 L775 268.8 L774.5 245.5 L750.5 241.2 L758.8 227.5 L756.2 215 L752.5 205.5 M761.2 351.2 L770 349.5 L776.2 343.8 L792.5 341.2 L800 345 L820 344.5 L820.5 337.5 L841.2 337.5 L841.2 343.8 L846.2 343.8 L846.2 338.8 L857.5 345 M708.8 408.8 L721.2 409.5 L722 421.2 L717.5 423.8 L715 440 L700 443 L713.8 459.5 L707.5 463.8 L708.8 468.8 L702 475 L715 477 L689.5 510 L705 523.8 L696.2 537 L705 537 L708.8 530.5 L713.8 531.2 L718.8 525 L730 531.2 L742.5 538.8 L745 542 L755 545 L775.5 551.2 L770 572.5 L766.2 578.8 L771.2 577.5 L767.5 592.5 L773.8 602.5 L773.8 612 M541.2 419.5 L545 437.5 L548 445 L549.5 453.8 L553.8 462.5 L555 472.5 L553.8 487.5 L550 500 L551.2 520 L546.2 540 L538.8 546.2 L546.2 548 L546.2 562.5 L545 576.2 L550 583.8 L551.2 592.5 M549.5 453.8 L537.5 455 L527.5 450 L517.5 450.5 L525 459.5 L524.5 465 L515 470 L506.2 476.2 L508.8 481.2 L501.2 482.5 L500 491.2 L495.5 493.8 L505 500 L498 508.8 L501.2 515 L490 515 L480 511.2 L470 515 L467.5 521.2 L456.2 523.8 L455 532 L448 532.5 L443.8 540 L443 558.8 L422.5 547.5 M631.2 432 L631.2 448.8 L636.2 450 L640 457.5 L646.2 458.8 L647.5 470 L649.5 476.2 L650 491.2 L636.2 492 L645 501.2 L649.5 508.8 L650.5 523.8 L642.5 525 L631.2 513.8 L631.2 504.5 L617 500 L617 515 L605 517 L597.5 513.8 L592.5 515.5 L580.5 515 L581.2 542.5 L589.5 547.5 L588.8 557.5 L580 558.8 L570 563.8 L546.2 562.5 M642.5 525 L643.8 540 L643.8 606.2 L577.5 606.2 L577.5 591.2 L560.5 587.5 L557.5 593.8 L551.2 592.5 L540 592.5 L535.5 595 L537.5 602.5 L540 612 M423 622.6 L433.3 620.4 L432.2 613.3 L435 612 L442.5 597 L471.2 597 L471.2 606.2 L479.5 606.2 L479.5 597 L496.2 597 L496.2 612 M607.5 606.2 L611.2 612 M881.7 278.2 L871.7 288.2 L866.7 283.9 L864.6 291 L862.5 296.7 L865.3 302.4 L866 308.1 L865.3 319.4 L862.5 322.3 L865.3 325.1 L865.3 340.8 L858.2 345 L859.6 357.8 L863.2 360.7 L862.5 368.5 L866 372 M911 292.5 L911 310 L909 313.8 L917.2 320 L911 328.8 L914.8 338.8 L924.8 341.2 L946 355.5 L952.2 354.5 L949.8 333.8 L951 330 M866 372 L879.8 373.8 L881.5 378.8 L879.8 388.8 L891 388.8 L891 382.5 L898.5 382.5 L898.5 395 L903.5 401.2 L910.5 400 L910.5 402 L905.5 402 L905.5 418 L938.5 418 L938.5 412.5 L949.8 412.5 L961 423.8 L969.8 430 L966.5 453.8 L975.5 456.2 L976 472.5 L974 487.5 L991 488 L992.2 497.5 L989.8 512.5 L996 520 L997.2 525 L987.2 525.5 L986.5 528.8 L981 529.5 L973.5 538 L976 541.2 L976 545 L986.5 546.2 L986.5 556.2 L974.8 550 L969.8 555 L961 562.5 L946 572.5 L933.5 587.5 L935.5 591.2 L958.5 592 L958.5 612 M997.2 525 L1006 525.5 L1006.5 533.8 L1012.2 533.8 L1012.2 526.2 L1037.2 525 L1034.8 515 L1046 515 L1046 504.5 L1054.8 504.5 L1055.5 520 L1064.8 520 L1064.8 514.5 L1072.2 514.5 L1072.2 492 L1086 491.2 L1086 487.5 L1108.5 487.5 L1116 494.5 L1129 494.5 M1099.8 487.5 L1113.5 514.5 L1127.2 514.5 L1115.5 536.2 L1121 545 L1123.5 560 L1127.2 562.5 L1124.8 570 L1131 590 L1129.8 597.5 L1136 600 L1131 612 M1127.2 514.5 L1133.5 511.2 M496.2 612 L496.2 650.8 L520 650.8 L527.5 645.8 L535 644.5 L533.8 637 L537.5 627 L538.8 617 L541.2 612 M535 644.5 L535 662 L540 668.2 L548.8 668.2 L546.2 687 L552.5 697 L556.2 708.2 L558.8 704.5 L567.5 702 L571.2 698.2 L576.2 708.2 L581.2 710.8 L590 710.8 L591.2 719.5 L616.2 725.8 M611.2 612 L618.8 617 L620 624.5 L631.2 625.8 L633.8 634.5 L630 645.8 L641.2 643.2 L646.2 657 L650 670.8 L656.2 672 L653.8 684.5 L655 689.5 L651.2 703.2 M616.2 725.8 L620 710.8 L623.8 713.2 L638.8 705.8 L651.2 703.2 L660 698.2 L670 694.5 L691.2 694.5 L705 690.8 L711.2 692 L712.5 697 L730 694.5 L745 697 L750 700.8 L767.5 699.5 L772.5 702 L785 694.5 L795 692 L808.8 693.2 L823.8 692 M772.5 612 L777.5 619.5 L787.5 623.2 L793.8 634.5 L798.8 645.8 L792.5 652 L795 662 L803.8 664.5 L803.8 654.5 L820 654.4 L819 661.2 L821.8 667.6 L824.5 667.6 L820.9 661.2 L826.4 655.7 L844.7 654.4 L846.5 660.3 L865.8 660.8 L858.4 652 L861.2 647.4 L870.3 644.7 L883.2 649.3 M803.8 664.5 L803.8 670.8 L823.8 692 L810 698.2 L808.8 712 L805 714.5 L806.2 732 L807.5 752 L813.8 755.8 L811.2 772 L807.5 784.5 L798.8 797 L803.8 809.5 L802.5 859.5 L806.2 864.5 L827.5 863.2 L836.2 872 L835 880.8 L842.5 889.5 L850 899.5 L855.5 905 M766.2 784.5 L761.2 784.5 L761.2 768.2 L771.2 768.2 L770 758.2 L760 757 L767.5 755.8 L780 755.8 L787.5 762 L796.2 760.8 L801.2 769.5 L811.2 772 M556.2 708.2 L560 717 L570 717 L571.2 729.5 L560 729.5 L558.8 737 L553.8 747 L556.2 757 L555 764.5 L570 762 L580 764.5 L590 763.2 L595 769.5 L593.8 778.2 L605 779.5 L612.5 772 M570 762 L570 774.5 L580 775.8 L580 783.2 L555 784.5 L543.8 779.5 L540 789.5 L537.5 807 L548 809.5 L548 823.2 L521.2 824 L523.8 834.5 L510 839.5 L512.5 845.8 L506.2 848.2 L497.5 848.2 L497.5 855.8 L506.2 858.2 L503.8 863.2 L495 867 L472.5 867 L476.2 874.5 L471.2 881.5 L450 873.2 L448.8 878.2 L430 879.5 M616.2 725.8 L612.5 772 L611.2 787 L607.5 793.2 L618.8 802 L620 819.5 L616.2 825.8 L605 824.5 L590 818.2 L586.2 824.5 L577.5 827 L575 837 L580 838.2 L570 834.5 L563.8 845.8 L567.5 862 L566.2 872 L570 887 L567.5 892 M616.2 825.8 L618.8 832 L622.5 838.2 L626.2 837 M676.2 804.5 L676.2 798.2 L666.2 798.2 L660 802 L662.5 809.5 L655 814.5 L641.2 820.8 L641.2 827 L646.2 830.8 L643.8 849.5 L646.2 853.2 L641.2 859.5 M447.5 952 L450 955.8 L470 954.5 L480 958.2 L495 956.5 L506.2 958.2 L513.8 964.5 L520 963.2 L520 968.2 M447.5 952 L448.8 967 L447.8 972 M959.8 612 L959.8 623.2 L952.2 624.5 L951 644.5 L939.8 647 L949.8 652 L947.2 663.2 L933.5 664.5 L931 670.8 M883.2 648.8 L886 649.5 L928.5 650.8 L926 665.8 L931 670.8 L917.2 692 L917.2 724.5 L904.8 725.8 L903.5 737 L907.2 752 L909.8 772 L906 782 L892.2 782 L892.2 785.8 L873.5 787 L876 802 L882.2 809.5 L877.2 812 L883.5 827 L892.2 832 L898.5 858.2 L919.8 869.5 L933.5 873.2 L933.5 880.8 M931 670.8 L941 672 L941 682 L942.2 674.5 L976 674.5 L976 685.8 L984.8 685.8 L984.8 705.8 L1019.8 706.5 L1013.5 712 L1013.5 719.5 L1018.5 724.5 L1036 724.5 L1037.2 732 L1046 739.5 L1058.5 754.5 L1076 769.5 L1092.2 769.5 L1094.8 775.8 L1091 787 L1083.5 793.2 L1079.8 804 L1092.2 818.2 L1106 817.5 L1121 814 L1123.5 819.5 L1134.8 815.8 L1139.8 823.2 M1126 612 L1136 622 L1134.8 638.2 L1123.5 649.5 L1131 658.2 L1142.2 660.8 L1143.5 687 L1142.2 707 L1153.5 719.5 L1162.2 735.8 L1166 732 L1178.5 737 L1190.5 750.8 L1179.8 757 L1191 772 L1178 773.2 L1176 784.5 L1148.5 809.5 L1146 822 L1139.8 823.2 L1168.5 862 L1164.8 864.5 L1166 869.5 L1177.2 870.8 M1164.8 864.5 L1153.5 865.8 L1144.8 858.2 L1128.5 860.8 L1127.2 854 L1097.2 861.5 L1086 853.2 L1078.5 868.2 L1073.5 859.5 L1061 862 L1051 857 L1038.5 872 L1024.8 880.8 L1024.8 888.2 L1009.8 895.8 L1009.8 902 L1008 905 M1298.5 750.8 L1297.2 763.2 L1269.8 751.5 L1263.5 757 L1236 756.5 L1243.5 768.2 L1243.5 775.8 L1253.5 782 L1252.2 787 L1262.2 790.8 L1263.5 798.2 L1266 804.5 L1262.2 812 L1268.5 824.5 L1263.5 829.5 L1269.8 833.2 L1259.8 838.2 L1263.5 844.5 L1256 852 L1257.2 860.8 L1249.8 864.5 L1251 870.8 L1244.8 874.5 L1249.8 879.5 M933.5 880.8 L927.2 887 L922.2 894.5 L923.5 902 L922.2 905 M975.8 905 L976 904.5 L969.8 902 L968.5 884.5 L949.8 882 L933.5 880.8 M976 904.5 L986 899.5 L991 903.2 L996.4 905 M1035 972.2 L1038.5 974.5 L1044.8 972 L1041 963.2 L1035 961.6 M1044.8 972 L1046 964.5 L1061 960.8 L1071 957 L1083.5 962 L1089.8 973.2 L1109.8 970.8 L1112.2 963.2 L1121 967 L1127.2 974.5 L1128.5 979.5 M1038.5 974.5 L1036 992 L1036 1014.5 L1035 1015 M1069.8 1034 L1088.5 1027 L1089.8 1023.2 L1116 1022 L1131 1034 M449.4 1128 L448.8 1129 L450 1144 L456.2 1154 L470 1156.5 L471.2 1166.5 L468.8 1170.2 L475 1177.8 L467.5 1189 L460 1192.8 L451.2 1194 L448.8 1206.5 L445 1209 L446.2 1221.5 L448.8 1231.5 L450 1234 M525 1144 L520 1147.8 L525 1151.5 L526.2 1164 L513.8 1170.2 L503.8 1170.2 L495 1182.8 L491.2 1185.2 L496.2 1191.5 L492.5 1204 L491.2 1211.5 L497.5 1220.2 L480 1231.5 L473.8 1231.5 M460 1236.5 L467.5 1226.5 L475 1232.8 M581.6 1128 L586.2 1130.2 M528.2 1128 L527.5 1134 L525 1144 M751.6 1125 L750 1134 L742.5 1141.5 L732.5 1144 M762 1198.8 L755 1197.8 M745 1324 L745 1330.2 L757.5 1337.8 L767.5 1350.2 L780 1359 L790 1367.8 L805 1374 L812.5 1384 L820 1391.5 L835 1414 M610 1184 L598.8 1196.5 L592.5 1189 L590 1212.8 L576.2 1214 L577.5 1231.5 L563.8 1234 L562.5 1241.5 L553.8 1244 L550 1254 L547.5 1275.2 L532.5 1280.2 M535 1294 L546.2 1289 L561.2 1291.5 L562.5 1287.8 L563.8 1292.8 L560 1304 L552.5 1307.8 L548.8 1319 L560 1329 L563.8 1314 L572.5 1305.2 L578.8 1299 L575 1290.2 L575 1281.5 L585 1284 L588.8 1286.5 L600 1290.2 L618.8 1295.2 M655 1309 L658.8 1314 L656.2 1324 L660 1336.5 L655 1344 L647.5 1340.2 L646.2 1330.2 L632.5 1332.8 L627.5 1341.5 L632.5 1346.5 L628.8 1356.5 L620 1366.5 L616.2 1382.8 L600 1375.2 L597.5 1364 L585 1371.5 L563.8 1375.2 L557.5 1386.5 M1064.8 1077.8 L1049.8 1076.5 L1056 1066.5 L1044.8 1059 L1047.2 1054 L1063.5 1042.8 L1068.5 1036.5 L1081 1034 M1035 1084.3 L1041 1082.8 L1046 1072.8 L1056 1066.5 M1019.8 1125 L1026 1141.5 L1028.5 1145.2 L1023.5 1164 L1041 1165.2 L1053.5 1164 L1056 1150.2 M998 1178.8 L1008.5 1180.2 L1007.2 1166.5 L1023.5 1167.8 L1023.5 1164 M998 1265.8 L1002.2 1259 M1023.5 1167.8 L1026 1184 L1029.8 1194 L1026 1200.2 L1016 1206.5 L1009.8 1214 L998.5 1219 L998 1222.4 M998 1228.2 L1008.5 1234 L1009.8 1241.5 L1002.2 1259 L1016 1267.8 L1026 1271.5 L1039.8 1275.2 L1043.5 1282.8 L1043.5 1286.5 M1096 1199 L1066 1214 L1056 1224 L1054.8 1231.5 L1059.8 1241.5 L1068.5 1259 L1076 1269 L1069.8 1280.2 L1062.2 1272.8 L1061 1289 L1061 1302.8 L1063.5 1317.8 L1044.8 1315.2 L1042.2 1310.2 L1029.8 1325.2 L1021 1337.8 M1069.8 1257.8 L1078.5 1270.2 L1087.2 1272.8 L1089.8 1266.5 L1081 1264 L1078.5 1270.2 L1078.5 1274 L1093.5 1276.5 L1096 1296.5 L1101 1310.2 L1109.8 1304 L1111 1296.5 L1123.5 1292.8 L1124.8 1299 L1153.5 1294 L1156 1299 L1159.8 1299 M857.5 907 L860 919.5 L856.25 927 L859.5 937.8 L869.1 939.1 L873.9 944.6 L869.8 948.1 L876.7 954.3 L876 963.2 L873.9 968.7 L876 981 L869.8 983.1 L868.4 979 L866.4 993.4 L859.5 998.2 M812.1 939.8 L818.3 935 L820.4 937.1 L825.2 936.4 L827.9 933.7 L838.2 931.6 L840.3 933.7 L843.7 928.2 L848.5 935 L854 937.8 L859.5 937.8 M812.1 939.8 L822.4 948.1 L825.2 952.9 L822.4 954.9 L827.9 960.4 L827.2 965.9 L832.7 970.1 L834.1 981 L854.7 986.5 L856.8 993.4 L850.6 996.2 L849.9 998.9 L859.5 998.2 M849.9 998.9 L849.9 1006.5 L843.7 1008.5 L845.8 1021.6 L841.6 1024.3 L842.3 1031.9 L836.2 1030.5 L838.2 1035.3 L843.7 1033.9 L848.5 1038 L844.4 1040.8 L858.8 1041.5 L860.9 1045.6 L858.8 1058 L856.1 1060 L859.5 1062.8 L854 1071 L842.3 1075.1 L834.8 1069.6 L829.3 1071 L822.4 1077.2 L821 1079.9 L811.4 1065.5 L816.9 1064.8 L817.6 1055.2 L812.8 1052.5 L814.2 1048.4 L805.9 1042.2 L793.6 1040.1 L802.5 1038.7 L802.5 1034.6 L792.9 1033.9 L794.9 1021.6 M792.9 941.2 L792.2 956.3 L786.7 952.9 L781.2 956.3 L781.2 971.4 L800.4 970.7 L792.9 979 L792.9 985.9 L800.4 986.5 L808.7 990.7 L816.9 983.8 L821 987.2 L830.7 990 L834.1 981 M808.7 990.7 L810.1 996.2 L814.9 1001.6 L804.6 1012.6 L795.6 1003.7 L794.9 1021.6 L784 1006.5 L775.7 1011.3 L757.2 1009.9 L753.7 1014.7 L746.9 1012.6 L745 1013.8 M859.5 998.2 L869.1 1008.5 L877.4 1004.4 L898 999.6 L906.9 997.3 L919.9 999.6 L921.3 985.9 L927.5 984.5 L930.2 974.2 L935.7 970.1 L946 970.7 L948.8 967.3 L961.2 967.3 L961.8 956.3 L965.3 948.8 L968 955.6 L972.1 955.6 L970.8 939.8 L967.3 930.9 M898 999.6 L902.8 1005.8 L910.3 1009.9 L913.8 1007.8 L917.9 1014 L921.3 1025 L918.6 1027.1 L922.7 1033.9 L930.9 1041.5 L935.1 1040.8 L939.2 1044.9 L940.5 1049 L948.8 1055.2 L952.2 1053.8 L957 1047.7 L961.2 1051.8 L957 1049 L957.7 1059.3 L954.3 1064.1 L949.5 1070.3 L950.9 1079.9 L962.5 1084.1 L963.9 1092.3 L969.4 1090.9 L970.8 1085.4 L974.9 1088.9 L993.4 1096.4 L1013.4 1106 L1016.1 1115.7 L1019.7 1125 M957 1047.7 L966.6 1033.2 L981.8 1027.7 L991.4 1036 L999.6 1027.7 L1009.2 1024.3 L1016.1 1018.1 L1025.7 1017.4 L1031.2 1011.3 L1035 1014.5 M981.8 1027.7 L975.6 1017.4 L981.8 1009.9 L987.3 1005.1 L994.1 1003 L1003 996.2 L1004.4 990 L1011.3 987.9 L1009.9 978.3 L1007.2 974.2 L996.9 967.3 L991.4 959.1 L988.6 954.9 L981.1 941.2 L991.4 936.4 L1001.7 927.5 L1009.2 925.4 L1016.1 931.6 L1018.8 944 L1025.7 949.5 L1029.8 954.9 L1035 959.5 M1009.9 978.3 L1018.8 972.8 L1031.2 970.1 L1035 973.9 M1009.2 925.4 L1011.3 911 L1005.1 908.2 L1006.7 905 M993.4 1096.4 L999.6 1090.9 L1018.8 1086.8 L1035 1083.7 M963.9 1092.3 L959.8 1091.6 L954.3 1099.2 L950.2 1101.9 L936.4 1098.5 L932.3 1093 L928.2 1095.1 L931.6 1101.9 L929.6 1104.7 L924.1 1101.2 L911.7 1099.9 L908.3 1088.9 L891.1 1095.7 L892.5 1104.7 L878 1109.5 L878.7 1112 M821 1079.9 L819 1077.2 L814.2 1074.5 L810.7 1078.6 L808.7 1091.6 L800.4 1089.6 L796.3 1090.2 L785.3 1097.8 L780.5 1092.3 L774.3 1086.1 L764.7 1081.3 L752.4 1079.9 L745.5 1070.3 L745 1069.8 M796.3 1090.2 L799.1 1100.5 L807.3 1099.2 L819.7 1106 L816.9 1111.5 L817 1112 M785.3 1097.8 L784 1108.8 L774.3 1103.3 L766.8 1108.8 L766.2 1112 M762 1118.8 L753.7 1115.7 L749.2 1125 M745 1048.6 L746.9 1051.1 L748.2 1055.2 L751 1060 L745.5 1062.1 L745 1062.2 M922.2 905 L919.8 910.8 L927.2 918.2 L941 920.8 L953.5 918.2 L948.5 927 L956 930.8 L966 930.8 L974.8 923.2 L964.8 910.8 L973.5 909.5 L975.8 905 M996.4 905 L1006 908.2 L1011 912 L1011 924.5 M984.8 907 L988 907 L988 909.5 L984.8 909.5 L984.8 907 M817.5 1112 L819.3 1118.9 L823 1124.8 L818.5 1132.2 L825.2 1139.6 L834.1 1145.6 L844.4 1150 L845.9 1157.4 L835.6 1164.8 L825.9 1166.3 L821.5 1166.3 L818.5 1176.7 L811.9 1182.6 L814.1 1194.4 L806.7 1191.5 L805.2 1203.3 L800 1204.8 L797 1199.6 L786.7 1203.3 L762 1199.2 M831.1 1169.3 L834.8 1175.2 L829.6 1175.2 L825.9 1166.3 M844.4 1150 L854.8 1155.9 L863.7 1161.1 L875.6 1160.4 L877.8 1150.7 L887.4 1154.4 L893.3 1153 L902.2 1157.4 L907.4 1166.3 L902.2 1169.3 L892.6 1172.2 L892.6 1181.1 L894.8 1184.1 L894.1 1190 L897 1203.3 L890.4 1208.5 L879.3 1211.5 M878.5 1112 L880 1115.9 L890.4 1117.4 L894.8 1122.6 L890.4 1129.3 L877 1130.7 L874.1 1138.1 L888.9 1149.3 L889.6 1153.7 M805.2 1203.3 L816.3 1206.3 L814.8 1213.7 L831.1 1210.7 L840.7 1208.5 L851.9 1210.7 L860.7 1215.2 L865.2 1208.5 L874.1 1207.8 L879.3 1211.5 M814.8 1213.7 L816.3 1221.1 L823.7 1224.1 L831.1 1221.9 L839.3 1224.8 L843 1228.5 L850.4 1231.5 L851.1 1238.1 L854.8 1243.3 L860.7 1246.3 L866.7 1255.9 L869.6 1263.3 L878.5 1264.8 L887.4 1264.1 L891.9 1269.3 L885.9 1273 L888.9 1278.1 L894.8 1275.2 L899.3 1284.1 L900.7 1287.8 M879.3 1211.5 L879.3 1216.7 L872.6 1217.4 L872.6 1228.5 L871.1 1233 L874.1 1241.9 L878.5 1246.3 L884.4 1244.8 L888.9 1252.2 L888.9 1255.9 L893.3 1258.1 L897.8 1256.7 L902.2 1262.6 L903.7 1269.3 L911.9 1270.7 L917 1268.5 M894.8 1184.1 L902.2 1184.8 L911.1 1191.5 L923 1190.7 L930.4 1195.9 L930.4 1200.4 L923.7 1203.3 L923 1213.7 L920.7 1218.1 L925.9 1222.6 L927.4 1228.5 L925.9 1233 L926.7 1241.9 L928.9 1244.1 L934.1 1238.9 L940 1241.1 L945.2 1247.8 L957 1255.9 L967.4 1258.1 L973.3 1265.6 L974.8 1269.3 M928.9 1244.1 L921.5 1252.2 L917 1268.5 M923.7 1184.1 L923.7 1170.7 L928.9 1171.5 L942.2 1178.1 L946.7 1182.6 L952.6 1179.6 L958.5 1184.1 L961.5 1193 L967.4 1190 L970.4 1173.7 L985.9 1163.3 L989.6 1169.3 L988.1 1175.2 L998 1178.9 M923.7 1184.1 L928.9 1190 L930.4 1195.9 M957 1255.9 L952.6 1269.3 L942.2 1275.9 L930.4 1287.8 L928.9 1292.2 M974.8 1269.3 L974.1 1277.4 L980.7 1278.9 L977.8 1292.2 L960 1295.2 L954.8 1304.1 M974.8 1269.3 L991.1 1268.5 L998 1263.9 M987.4 1308.5 L991.1 1317.4 L998 1332.4 M446.7 972 L446.2 975.8 L448.1 985.6 L456 993.5 L459.9 1001.3 L453.1 1007.3 L456 1017.1 L457 1024 M354.6 1032.8 L361.5 1027.9 L356.6 1021 L363.5 1012.8 L379.2 1018.1 L391 1023 L408.8 1033.8 L420.6 1036.8 L424.5 1030.9 L432.4 1028.9 L437.3 1024 L448.1 1021 L457 1024 L463.9 1026 L467.8 1032.8 L479.6 1031.9 L485.5 1026 L501.3 1023 L511.1 1027.9 L516.1 1028.9 L518 1037.8 M518 1037.8 L522 1027.9 L528.9 1022 L546.6 1020.1 L556.4 1024 L562.3 1029.9 L566.3 1040.7 L569.2 1042.7 L568.2 1058.4 L570.2 1078.1 L565.3 1088 L563.3 1097.8 L559.4 1101.8 L556.4 1105.7 L544.6 1104.7 L546.6 1109.6 L552.5 1111.6 L556.4 1115.5 L567.3 1108.7 L576.1 1123.4 L583.1 1128 M518 1037.8 L515.1 1052.5 L519 1058.4 L525.9 1070.3 L524.9 1076.2 L532.8 1084 L522 1088 L521 1095.9 L523.9 1105.7 L532.8 1112.6 L544.6 1115.5 L546.6 1109.6 M522 1088 L505.2 1095.9 L515.1 1114.6 L487.5 1095.9 L481.6 1084 L476.7 1084 L475.7 1091.9 L467.8 1095.9 L459.9 1078.1 L456 1076.2 L446.2 1079.1 L438.3 1071.2 L424.5 1072.2 L414.7 1079.1 L419.6 1086 L416.6 1093.9 L410.7 1098.8 L415.6 1103.7 L408.8 1106.7 L400.9 1108.7 M487.5 1095.9 L483.6 1105.7 L471.8 1119.5 L465.9 1123.4 L456 1119.5 L451.2 1128 M532.8 1112.6 L528.9 1119.5 L528.1 1128 M569.2 1042.7 L576.1 1036.8 L571.2 1021 L574.1 1017.1 M641.1 1023 L643.1 1032.8 L649 1038.8 L664.7 1046.6 L676.5 1047.6 L672.6 1052.5 L678.5 1060.4 L677.5 1070.3 L684.4 1080.1 L678.5 1088 L680.5 1097.8 L677.5 1111.6 M692.3 989.5 L702.1 989.5 L704.1 997.4 L710 1006.3 L721.8 1009.2 L739.5 1009.2 L745 1018.4 M745 1019.5 L739.5 1025 L741.5 1030.9 L732.6 1035.8 L739.5 1040.7 L741.5 1050.6 L745 1054.1 M745 1066.8 L743.5 1068.3 L745 1071.3" fill="none" stroke="#666" stroke-width="1" stroke-linejoin="round"/>
<ellipse cx="1047.2" cy="1296.5" rx="8.5" ry="10" fill="none" stroke="#666" stroke-width="1"/>
<text x="616.2" y="308.3" font-size="11" font-style="italic" fill="#4a4a4a" text-anchor="middle">Ascensión</text>
<text x="824.2" y="282.8" font-size="11" font-style="italic" fill="#4a4a4a" text-anchor="middle">Juárez</text>
<text x="451.2" y="421.3" font-size="11" font-style="italic" fill="#4a4a4a" text-anchor="middle">Janos</text>
<text x="602" y="484.6" font-size="11" font-style="italic" fill="#4a4a4a" text-anchor="middle">Nuevo Casas Grandes</text>
<text x="494.5" y="558.3" font-size="11" font-style="italic" fill="#4a4a4a" text-anchor="middle">Casas Grandes</text>
<text x="615.8" y="566.6" font-size="11" font-style="italic" fill="#4a4a4a" text-anchor="middle">Galeana</text>
<text x="845.5" y="502.8" font-size="11" font-style="italic" fill="#4a4a4a" text-anchor="middle">Ahumada</text>
<text x="928.5" y="330.3" font-size="11" font-style="italic" fill="#4a4a4a" text-anchor="middle">Praxedis G. Guerrero</text>
<text x="994" y="419.0" font-size="11" font-style="italic" fill="#4a4a4a" text-anchor="middle">Guadalupe</text>
<text x="694.1" y="619.1" font-size="11" font-style="italic" fill="#4a4a4a" text-anchor="middle">Buenaventura</text>
<text x="588.5" y="661.6" font-size="11" font-style="italic" fill="#4a4a4a" text-anchor="middle">Ignacio Zaragoza</text>
<text x="482.5" y="746.6" font-size="11" font-style="italic" fill="#4a4a4a" text-anchor="middle">Madera</text>
<text x="588.8" y="745.3" font-size="11" font-style="italic" fill="#4a4a4a" text-anchor="middle">Gómez Farías</text>
<text x="712" y="745.3" font-size="11" font-style="italic" fill="#4a4a4a" text-anchor="middle">Namiquipa</text>
<text x="839" y="817.3" font-size="11" font-style="italic" fill="#4a4a4a" text-anchor="middle">Chihuahua</text>
<text x="671.8" y="844.0" font-size="11" font-style="italic" fill="#4a4a4a" text-anchor="middle">Bachíniva</text>
<text x="590.5" y="854.0" font-size="11" font-style="italic" fill="#4a4a4a" text-anchor="middle">Matachí</text>
<text x="521.8" y="879.0" font-size="11" font-style="italic" fill="#4a4a4a" text-anchor="middle">Temósachic</text>
<text x="730.2" y="880.8" font-size="11" font-style="italic" fill="#4a4a4a" text-anchor="middle">Cuauhtémoc</text>
<text x="801" y="879.8" font-size="11" font-style="italic" fill="#4a4a4a" text-anchor="middle">Riva Palacio</text>
<text x="624.2" y="948.6" font-size="11" font-style="italic" fill="#4a4a4a" text-anchor="middle">Guerrero</text>
<text x="784.8" y="967.8" font-size="11" font-style="italic" fill="#4a4a4a" text-anchor="middle">Gran Morelos</text>
<text x="849" y="962.8" font-size="11" font-style="italic" fill="#4a4a4a" text-anchor="middle">Santa Isabel</text>
<text x="746.8" y="987.8" font-size="11" font-style="italic" fill="#4a4a4a" text-anchor="middle">Cusihuiriachi</text>
<text x="395.5" y="999.0" font-size="11" font-style="italic" fill="#4a4a4a" text-anchor="middle">Moris</text>
<text x="500.8" y="999.0" font-size="11" font-style="italic" fill="#4a4a4a" text-anchor="middle">Ocampo</text>
<text x="813" y="1030.8" font-size="11" font-style="italic" fill="#4a4a4a" text-anchor="middle">Dr. Belisario Domínguez</text>
<text x="1037.2" y="653.3" font-size="11" font-style="italic" fill="#4a4a4a" text-anchor="middle">Coyame del Sotol</text>
<text x="1221.2" y="738.3" font-size="11" font-style="italic" fill="#4a4a4a" text-anchor="middle">Ojinaga</text>
<text x="980.5" y="807.3" font-size="11" font-style="italic" fill="#4a4a4a" text-anchor="middle">Aldama</text>
<text x="1339.5" y="833.3" font-size="11" font-style="italic" fill="#4a4a4a" text-anchor="middle">Manuel Benavides</text>
<text x="947.5" y="905.3" font-size="11" font-style="italic" fill="#4a4a4a" text-anchor="middle">Aquiles Serdán</text>
<text x="1084" y="916.0" font-size="11" font-style="italic" fill="#4a4a4a" text-anchor="middle">Julimes</text>
<text x="1006.2" y="957.3" font-size="11" font-style="italic" fill="#4a4a4a" text-anchor="middle">Meoqui</text>
<text x="966.2" y="988.3" font-size="11" font-style="italic" fill="#4a4a4a" text-anchor="middle">Rosales</text>
<text x="1015.5" y="1006.0" font-size="11" font-style="italic" fill="#4a4a4a" text-anchor="middle">Delicias</text>
<text x="1039.2" y="1032.3" font-size="11" font-style="italic" fill="#4a4a4a" text-anchor="middle">Saucillo</text>
<text x="1223.8" y="1024.0" font-size="11" font-style="italic" fill="#4a4a4a" text-anchor="middle">Camargo</text>
<text x="440" y="1055.3" font-size="11" font-style="italic" fill="#4a4a4a" text-anchor="middle">Uruachi</text>
<text x="543" y="1065.3" font-size="11" font-style="italic" fill="#4a4a4a" text-anchor="middle">Maguarichi</text>
<text x="621.8" y="1073.6" font-size="11" font-style="italic" fill="#4a4a4a" text-anchor="middle">Bocoyna</text>
<text x="710" y="1072.3" font-size="11" font-style="italic" fill="#4a4a4a" text-anchor="middle">Carichí</text>
<text x="780.5" y="1055.3" font-size="11" font-style="italic" fill="#4a4a4a" text-anchor="middle">San Francisco de Borja</text>
<text x="488.8" y="1149.3" font-size="11" font-style="italic" fill="#4a4a4a" text-anchor="middle">Guazapares</text>
<text x="447.5" y="1167.3" font-size="11" font-style="italic" fill="#4a4a4a" text-anchor="middle">Chínipas</text>
<text x="788" y="1155.3" font-size="11" font-style="italic" fill="#4a4a4a" text-anchor="middle">Nonoava</text>
<text x="855" y="1187.8" font-size="11" font-style="italic" fill="#4a4a4a" text-anchor="middle">Rosario</text>
<text x="543" y="1197.3" font-size="11" font-style="italic" fill="#4a4a4a" text-anchor="middle">Urique</text>
<text x="694" y="1212.8" font-size="11" font-style="italic" fill="#4a4a4a" text-anchor="middle">Guachochi</text>
<text x="856" y="1234.8" font-size="11" font-style="italic" fill="#4a4a4a" text-anchor="middle">El Tule</text>
<text x="606.5" y="1256.0" font-size="11" font-style="italic" fill="#4a4a4a" text-anchor="middle">Batopilas de Manuel Gómez Morín</text>
<text x="820" y="1296.8" font-size="11" font-style="italic" fill="#4a4a4a" text-anchor="middle">Balleza</text>
<text x="595.8" y="1330.6" font-size="11" font-style="italic" fill="#4a4a4a" text-anchor="middle">Morelos</text>
<text x="740.8" y="1419.8" font-size="11" font-style="italic" fill="#4a4a4a" text-anchor="middle">Guadalupe y Calvo</text>
<text x="1101.2" y="1049.3" font-size="11" font-style="italic" fill="#4a4a4a" text-anchor="middle">La Cruz</text>
<text x="901.2" y="1079.3" font-size="11" font-style="italic" fill="#4a4a4a" text-anchor="middle">Satevó</text>
<text x="1034.5" y="1121.0" font-size="11" font-style="italic" fill="#4a4a4a" text-anchor="middle">San Francisco de Conchos</text>
<text x="952.5" y="1143.0" font-size="11" font-style="italic" fill="#4a4a4a" text-anchor="middle">Valle de Zaragoza</text>
<text x="960.2" y="1216.8" font-size="11" font-style="italic" fill="#4a4a4a" text-anchor="middle">Hidalgo del Parral</text>
<text x="1026.8" y="1224.0" font-size="11" font-style="italic" fill="#4a4a4a" text-anchor="middle">Allende</text>
<text x="897" y="1229.8" font-size="11" font-style="italic" fill="#4a4a4a" text-anchor="middle">Huejotitán</text>
<text x="1215.2" y="1227.3" font-size="11" font-style="italic" fill="#4a4a4a" text-anchor="middle">Jiménez</text>
<text x="1100" y="1259.8" font-size="11" font-style="italic" fill="#4a4a4a" text-anchor="middle">López</text>
<text x="934.2" y="1268.6" font-size="11" font-style="italic" fill="#4a4a4a" text-anchor="middle">San Francisco del Oro</text>
<text x="955.5" y="1286.0" font-size="11" font-style="italic" fill="#4a4a4a" text-anchor="middle">Santa Bárbara</text>
<text x="1004.2" y="1302.8" font-size="11" font-style="italic" fill="#4a4a4a" text-anchor="middle">Matamoros</text>
<text x="1108.2" y="1321.8" font-size="11" font-style="italic" fill="#4a4a4a" text-anchor="middle">Coronado</text>
<text x="193.5" y="616.4" font-size="24.5" font-style="italic" font-weight="bold" fill="#808080" text-anchor="middle">Sonora</text>
<text x="481.7" y="1439.5" font-size="24.5" font-style="italic" font-weight="bold" fill="#808080" text-anchor="middle">Sinaloa</text>
<text x="1141.8" y="1488.6" font-size="24.5" font-style="italic" font-weight="bold" fill="#808080" text-anchor="middle">Durango</text>
<text x="1633.7" y="1217" font-size="24.5" font-style="italic" font-weight="bold" fill="#808080" text-anchor="middle">Coahuila</text>
<text x="1214" y="229.5" font-size="24.5" font-style="italic" font-weight="bold" fill="#808080" text-anchor="middle" textLength="471.5" lengthAdjust="spacing">ESTADOS UNIDOS DE NORTEAMÉRICA</text>
<symbol id="map-n" viewBox="-20 -20 40 40" overflow="visible"><circle r="19.6" fill="#fff"/><circle r="19.3" fill="none" stroke="#000" stroke-width="1" stroke-dasharray="1.3 1.5"/><path d="M-14 -8 Q-8 -12.5 1 -8.5 Q7.5 -4.5 9 -1 M-14 -8 Q-12 -4 -8 -2" fill="none" stroke="#000" stroke-width="1.2" stroke-dasharray="1.2 1.8"/><path d="M-8 0 Q-7 3 -3 3.5 M-4 3 Q2 1 7 3 Q12 6 13 10 M-4 3 L-4 8 M-2 4 L3 8 L5 3 M-3 9 Q2 12 6 11 M2 13 L5 11" fill="none" stroke="#000" stroke-width="1.3"/><path d="M-9 5 L-6 8 L-2 11 M7 7 L11 12 M8 12 L4 14 M12 8 L11 13" fill="none" stroke="#000" stroke-width="1.2" stroke-dasharray="1.2 2"/></symbol>
<symbol id="map-o" viewBox="-20 -20 40 40" overflow="visible"><circle r="19.6" fill="#fff"/><circle r="19.3" fill="none" stroke="#000" stroke-width="1" stroke-dasharray="1.3 1.5"/><path d="M-14 -7 Q-9 -5 -4 0 M13.5 -7.4 Q9 -5 6 -1 M-10 11 L-6 7 M9 3 L13 1.5" fill="none" stroke="#000" stroke-width="0.9" stroke-dasharray="2 1.2"/><path d="M0.8 5.2 L-1.6 6.8 L-3.7 7.3 L-1.5 5.8 M5.4 5.3 L3.2 4.9 M2.7 1.7 L3.4 2.1 M6.5 5.1 L9.0 2.7 M3.9 0.9 L4.1 1.3 M-3.4 1.4 L-2.9 2.1 M-1.6 6.6 L-1.3 7.2 M-3.0 3.4 L-3.2 5.6 L-3.9 4.3 M4.4 8.4 L4.8 8.5 M5.9 -0.5 L6.5 -2.7 L6.5 -4.5 M-1.9 8.5 L-4.3 9.4 L-2.9 9.8 M4.3 1.0 L3.5 1.0 L5.0 -1.2 L2.9 -2.4 M1.4 2.1 L2.4 2.9 L5.0 4.5 L3.8 4.0 M1.4 2.7 L0.7 3.3 L0.7 1.8 M0.4 8.6 L-0.1 10.5 L-2.3 10.2 M-4.4 1.5 L-2.5 0.3 L-2.9 -0.4 M6.9 -0.9 L4.7 -2.7 M1.5 2.9 L-0.1 1.8 L-2.0 2.0 L-1.4 1.0 M6.3 7.5 L7.1 8.8 L6.9 10.7 L9.2 11.6 M-2.0 1.9 L-4.0 2.6 L-6.3 0.4 M2.4 5.4 L2.9 3.3 L3.3 3.5 M6.8 1.8 L8.7 2.4 M3.6 5.6 L4.2 5.5 L2.2 5.4 M6.3 2.7 L4.1 0.6 L3.3 -0.6 M2.9 1.4 L1.4 3.7 M-1.8 7.3 L-0.5 6.2 M0.8 2.1 L0.9 4.2 L0.1 2.8 M-2.7 2.2 L-4.1 3.8 L-1.6 5.6 L-0.0 7.3 M1.6 0.6 L1.6 1.8 L4.1 3.3 L4.0 1.8 M-1.1 1.2 L1.4 3.6 L0.7 2.1 L-0.7 0.5" fill="none" stroke="#000" stroke-width="0.95" stroke-linejoin="round"/><path d="M1.6 4.9 L1.5 6.2 L0.3 7.3 M1.4 4.5 L-0.0 3.8 M6.6 6.1 L7.1 6.5 L6.7 6.3 L7.6 6.9 M1.8 1.2 L0.2 0.1 M4.0 4.5 L3.4 4.9 L2.3 3.9 M4.0 4.2 L3.8 3.4 M7.5 3.9 L8.2 3.3 M4.2 6.1 L4.4 4.7 M5.3 5.3 L6.9 6.6 M5.4 4.0 L5.3 5.7 M3.4 4.6 L2.3 5.2 L1.7 4.5 L-0.0 4.2 M4.9 3.4 L3.5 1.8 L4.6 0.6 L4.8 0.4" fill="none" stroke="#000" stroke-width="1.4" stroke-linejoin="round"/></symbol>
<symbol id="map-m" viewBox="-20 -20 40 40" overflow="visible"><circle r="19.6" fill="#fff"/><circle r="19.3" fill="none" stroke="#000" stroke-width="1" stroke-dasharray="1.3 1.5"/><path d="M5.0 -7.6 L4.6 -7.2 M2.1 0.3 L0.6 1.5 M3.3 -7.2 L4.8 -7.3 M4.7 4.6 L5.1 3.4 M7.1 0.5 L7.1 1.4 M2.2 1.3 L3.1 1.6 M2.0 -6.3 L3.1 -6.4 M6.9 2.2 L7.6 3.8 M6.8 -4.4 L6.6 -2.8 M3.4 5.5 L2.2 4.5 M4.7 7.3 L5.1 6.6 M4.0 -2.1 L3.6 -1.8 M7.4 -0.5 L8.0 1.0 M6.7 5.1 L7.3 3.8 M6.6 5.1 L7.9 5.4 M3.2 2.1 L4.3 2.4 M2.2 -6.7 L3.3 -4.9 M6.0 -10.7 L5.7 -11.9 M6.4 -6.5 L7.6 -8.1 M2.0 0.1 L2.7 -0.5 M6.5 5.6 L6.5 7.4 M2.2 -6.2 L2.5 -7.8 M4.3 -8.5 L4.7 -9.7 M5.9 -11.6 L5.3 -10.0 M4.4 5.9 L4.3 6.0 M5.4 0.7 L5.6 1.1 M4.8 6.8 L4.6 7.6 M3.7 -7.6 L5.2 -7.6 M1.6 -1.3 L1.4 -1.0 M5.1 -12.1 L5.5 -13.7 M4.6 0.4 L5.2 -0.2 M6.1 2.0 L4.6 0.4 M7.5 1.4 L6.7 1.2 M3.7 -0.4 L3.2 -1.0 M5.4 -4.9 L4.8 -5.4 M2.4 3.3 L2.7 4.2 M3.1 -6.1 L4.1 -7.1 M4.5 -8.7 L5.1 -10.1 M3.8 -5.9 L4.8 -6.1 M3.5 5.0 L3.0 5.6 M4.6 5.6 L3.8 4.3 M2.8 -1.6 L3.8 -0.4 M3.7 -8.7 L4.7 -8.2 M4.1 4.0 L2.9 3.3 M3.7 3.8 L3.2 3.5 M4.2 -3.9 L5.6 -5.1 M5.8 -12.4 L7.0 -10.7 M7.8 -3.6 L9.1 -4.6 M6.6 2.8 L7.1 2.9 M3.8 -6.6 L3.0 -8.1 M3.4 -0.4 L4.4 -2.1 M5.4 6.0 L6.8 7.5 M5.0 5.9 L3.5 6.8 M3.8 -9.0 L4.3 -8.9 M7.7 -4.0 L8.0 -4.6 M6.9 -7.3 L6.8 -6.3 M2.9 -5.3 L3.0 -4.1 M6.2 -9.0 L7.6 -7.9 M2.6 4.4 L3.1 5.7 M4.1 -11.5 L3.3 -11.4 M4.6 -3.8 L5.5 -5.6 M3.6 -11.4 L2.4 -12.9 M5.3 7.5 L4.0 7.5 M3.7 -6.0 L3.2 -5.5 M3.9 -0.5 L2.9 -1.1 M5.0 -10.0 L5.7 -10.4 M3.6 -10.9 L3.2 -10.5 M4.2 3.5 L5.2 4.0 M4.0 -3.7 L3.9 -2.9 M6.1 -3.9 L5.9 -4.8" fill="none" stroke="#000" stroke-width="1.3"/><path d="M4.4 8 Q2 11 0 11 M-10 13 q1.5 -3 3 -1 q1.2 -2.6 2.4 0 q1.4 -2.4 2.6 -0.4 q1.2 -2 2.2 -1 M-10 13.4 H-1" fill="none" stroke="#000" stroke-width="1.2"/><path d="M9 -9 Q11.5 -1 9 7 M0.5 -8 Q-1 -2 0 4" fill="none" stroke="#000" stroke-width="0.8" stroke-dasharray="1.2 1.6"/></symbol>
<symbol id="ico-o" viewBox="-20 -20 40 40" overflow="visible"><circle r="18.5" fill="#fff"/><circle r="17.9" fill="none" stroke="#000" stroke-width="0.6" stroke-dasharray="2 1.3"/><path d="M-14 -7 Q-9 -5 -4 0 M13.5 -7.4 Q9 -5 6 -1 M-13 10 Q-10 9 -6 6.5 M11 3 L14 2" fill="none" stroke="#000" stroke-width="0.5" stroke-dasharray="2.2 0.9"/><path d="M0.6 5.3 L-1.7 7.0 L-3.8 7.4 L-1.7 5.9 M5.9 5.4 L3.7 5.0 M2.9 1.5 L3.5 2.0 M7.2 5.2 L9.6 2.9 M4.2 0.7 L4.4 1.1 M-4.1 1.2 L-3.7 2.0 M-2.1 6.8 L-1.7 7.4 M-3.7 3.4 L-3.9 5.6 L-4.6 4.3 M4.7 8.8 L5.1 8.9 M6.5 -0.8 L7.1 -3.0 L7.1 -4.8 M-2.4 8.9 L-4.8 9.8 L-3.4 10.2 M4.6 0.8 L3.9 0.8 L5.4 -1.4 L3.3 -2.6 M1.3 2.0 L2.3 2.8 L4.9 4.5 L3.8 3.9 M1.4 2.7 L0.6 3.2 L0.6 1.8 M0.2 9.0 L-0.3 10.9 L-2.5 10.6 M-5.3 1.3 L-3.4 0.2 L-3.8 -0.6 M7.6 -1.2 L5.5 -3.0 M1.5 2.9 L-0.2 1.8 L-2.0 1.9 L-1.4 1.0 M6.9 7.8 L7.8 9.1 L7.5 11.0 L9.9 11.9 M-2.5 1.8 L-4.5 2.5 L-6.8 0.3 M2.5 5.6 L3.0 3.5 L3.4 3.7 M7.5 1.7 L9.4 2.2 M3.9 5.8 L4.4 5.6 L2.4 5.6 M6.9 2.7 L4.7 0.6 L3.9 -0.6 M3.1 1.2 L1.5 3.6 M-2.3 7.6 L-1.0 6.5 M0.6 2.0 L0.7 4.1 L-0.0 2.7 M-3.3 2.1 L-4.8 3.7 L-2.2 5.6 L-0.6 7.2 M1.6 0.4 L1.6 1.6 L4.1 3.1 L4.0 1.5 M-1.5 1.0 L1.0 3.4 L0.3 1.9 L-1.1 0.4 M3.5 8.4 L5.3 8.3 L6.1 9.8 L3.9 10.6 M7.6 0.1 L7.5 -1.6 M2.8 -0.2 L2.3 -0.7 L4.6 0.4 L2.9 -1.5 M6.2 8.7 L4.3 10.4 L6.8 11.2 L6.1 11.4" fill="none" stroke="#000" stroke-width="0.55" stroke-linejoin="round"/><path d="M0.5 4.3 L0.3 5.6 L-0.8 6.7 M0.2 4.0 L-1.3 3.2 M6.8 5.4 L7.3 5.7 L6.9 5.6 L7.8 6.1 M0.6 1.0 L-1.0 -0.1 M3.5 4.0 L2.9 4.3 L1.8 3.4 M3.5 3.7 L3.3 2.9 M8.0 3.4 L8.7 2.8 M3.8 5.4 L4.0 4.0 M5.2 4.7 L6.8 5.9 M5.3 3.5 L5.2 5.2 M2.8 4.0 L1.7 4.6 L1.1 3.9 L-0.7 3.6 M4.7 2.9 L3.3 1.4 L4.3 0.2 L4.5 0.0" fill="none" stroke="#000" stroke-width="0.9" stroke-linejoin="round"/></symbol>
<symbol id="ico-m" viewBox="-20 -20 40 40" overflow="visible"><circle r="18.5" fill="#fff"/><circle r="17.9" fill="none" stroke="#000" stroke-width="0.6" stroke-dasharray="2 1.3"/><path d="M4.8 -13 Q8.6 -5 7.6 3 Q6.6 7.5 5 9 Q2.4 4 2.6 -3 Q3 -9 4.8 -13Z" fill="none" stroke="#000" stroke-width="0.5"/><path d="M5.0 -7.6 L4.6 -7.2 M2.1 0.3 L0.6 1.5 M3.3 -7.2 L4.8 -7.3 M4.7 4.6 L5.1 3.4 M7.1 0.5 L7.1 1.4 M2.2 1.3 L3.1 1.6 M2.0 -6.3 L3.1 -6.4 M6.9 2.2 L7.6 3.8 M6.8 -4.4 L6.6 -2.8 M3.4 5.5 L2.2 4.5 M4.7 7.3 L5.1 6.6 M4.0 -2.1 L3.6 -1.8 M7.4 -0.5 L8.0 1.0 M6.7 5.1 L7.3 3.8 M6.6 5.1 L7.9 5.4 M3.2 2.1 L4.3 2.4 M2.2 -6.7 L3.3 -4.9 M6.0 -10.7 L5.7 -11.9 M6.4 -6.5 L7.6 -8.1 M2.0 0.1 L2.7 -0.5 M6.5 5.6 L6.5 7.4 M2.2 -6.2 L2.5 -7.8 M4.3 -8.5 L4.7 -9.7 M5.9 -11.6 L5.3 -10.0 M4.4 5.9 L4.3 6.0 M5.4 0.7 L5.6 1.1 M4.8 6.8 L4.6 7.6 M3.7 -7.6 L5.2 -7.6 M1.6 -1.3 L1.4 -1.0 M5.1 -12.1 L5.5 -13.7 M4.6 0.4 L5.2 -0.2 M6.1 2.0 L4.6 0.4 M7.5 1.4 L6.7 1.2 M3.7 -0.4 L3.2 -1.0 M5.4 -4.9 L4.8 -5.4 M2.4 3.3 L2.7 4.2 M3.1 -6.1 L4.1 -7.1 M4.5 -8.7 L5.1 -10.1 M3.8 -5.9 L4.8 -6.1 M3.5 5.0 L3.0 5.6 M4.6 5.6 L3.8 4.3 M2.8 -1.6 L3.8 -0.4 M3.7 -8.7 L4.7 -8.2 M4.1 4.0 L2.9 3.3 M3.7 3.8 L3.2 3.5 M4.2 -3.9 L5.6 -5.1 M5.8 -12.4 L7.0 -10.7 M7.8 -3.6 L9.1 -4.6 M6.6 2.8 L7.1 2.9 M3.8 -6.6 L3.0 -8.1 M3.4 -0.4 L4.4 -2.1 M5.4 6.0 L6.8 7.5 M5.0 5.9 L3.5 6.8 M3.8 -9.0 L4.3 -8.9 M7.7 -4.0 L8.0 -4.6 M6.9 -7.3 L6.8 -6.3 M2.9 -5.3 L3.0 -4.1 M6.2 -9.0 L7.6 -7.9 M2.6 4.4 L3.1 5.7 M4.1 -11.5 L3.3 -11.4 M4.6 -3.8 L5.5 -5.6 M3.6 -11.4 L2.4 -12.9 M5.3 7.5 L4.0 7.5 M3.7 -6.0 L3.2 -5.5 M3.9 -0.5 L2.9 -1.1 M5.0 -10.0 L5.7 -10.4 M3.6 -10.9 L3.2 -10.5 M4.2 3.5 L5.2 4.0 M4.0 -3.7 L3.9 -2.9 M6.1 -3.9 L5.9 -4.8" fill="none" stroke="#000" stroke-width="0.95"/><path d="M4.4 8 Q2 11 0 11 M-10 13 q1.5 -3 3 -1 q1.2 -2.6 2.4 0 q1.4 -2.4 2.6 -0.4 q1.2 -2 2.2 -1 M-10 13.4 H-1" fill="none" stroke="#000" stroke-width="0.8"/></symbol>
<symbol id="ico-n" viewBox="-20 -20 40 40" overflow="visible"><circle r="18.5" fill="#fff"/><circle r="17.9" fill="none" stroke="#000" stroke-width="0.6" stroke-dasharray="2 1.3"/><path d="M-14 -8 Q-8 -12.5 1 -8.5 Q7.5 -4.5 9 -1 Q1 2 -7 -2 Q-12.5 -5 -14 -8Z M-9 5 Q-3 0.5 5 2 Q11.5 4 13 9 Q8 14 0 13 Q-7 10.5 -9 5Z M-7 5.5 Q2 4 11 9.5 M-5.5 9 Q2 7.5 8 12 M-2 3 Q3 5 4 12 M-11 -7 Q-3 -7 6 -1.5 M-9 4 L-5 -1" fill="none" stroke="#111" stroke-width="0.55"/></symbol>
<use href="#map-o" x="712.6999999999999" y="887.6999999999999" width="39.2" height="39.2"/>
<use href="#map-o" x="609.9" y="954.4" width="39.2" height="39.2"/>
<use href="#map-o" x="645.9" y="1137.4" width="39.2" height="39.2"/>
<use href="#map-m" x="682.9" y="1226.4" width="39.2" height="39.2"/>
<use href="#map-n" x="1196.2" y="1050.3000000000002" width="39.2" height="39.2"/>
<use href="#map-n" x="1182.2" y="1236.4" width="39.2" height="39.2"/>
</g>
<rect x="1527" y="189.5" width="599" height="730.5" fill="#fff" stroke="#666" stroke-width="3"/>
<rect x="1528.5" y="188" width="597.5" height="106" fill="url(#gl)"/>
<rect x="1528.5" y="297" width="597.5" height="20" fill="url(#gl2)"/>
<rect x="1525.5" y="188" width="3" height="733.5" fill="#666"/>
<rect x="1528" y="293.8" width="596" height="3.2" fill="#5c5c5c"/>
<rect x="1527" y="599.8" width="599" height="3" fill="#666"/>
<rect x="1527" y="812.3" width="599" height="3" fill="#666"/>
<text x="1831" y="223.3" font-size="27.5" fill="#4d4d4d" font-weight="bold" text-anchor="middle" textLength="390" lengthAdjust="spacing" >TRABAJADORES INDÍGENAS</text>
<text x="1825" y="255" font-size="27.5" fill="#4d4d4d" font-weight="bold" text-anchor="middle" textLength="453" lengthAdjust="spacing" >SIN ACCESO A SERVICIO MÉDICO</text>
<text x="1829.5" y="286.7" font-size="27.5" fill="#4d4d4d" font-weight="bold" text-anchor="middle" textLength="241" lengthAdjust="spacing" >PROPORCIÓN 0- 1</text>
<text x="1559.5" y="334.3" font-size="22" fill="#000" font-weight="bold" textLength="93" lengthAdjust="spacing" >Cuartiles</text>
<text x="1900.8" y="334.3" font-size="22" fill="#000" font-weight="bold" textLength="50.5" lengthAdjust="spacing" >Nivel</text>
<rect x="1560.3" y="349.3" width="73.5" height="37.5" fill="#ffffff" stroke="#777" stroke-width="1"/>
<text x="1646" y="375.5" font-size="24.5" fill="#000" textLength="32.5" lengthAdjust="spacing" >SD</text>
<text x="1901.5" y="381.7" font-size="21" fill="#000" textLength="82" lengthAdjust="spacing" >Sin Dato</text>
<rect x="1560.3" y="399" width="73.5" height="37.5" fill="#38a800" stroke="#777" stroke-width="1"/>
<text x="1646" y="424.8" font-size="24.5" fill="#000" textLength="203.5" lengthAdjust="spacing" >0.32476 - 0.90949</text>
<text x="1901.5" y="429" font-size="21" fill="#000" textLength="178" lengthAdjust="spacing" >Bajo (Con acceso)</text>
<rect x="1560.3" y="448" width="73.5" height="37.5" fill="#ffff00" stroke="#777" stroke-width="1"/>
<text x="1646" y="472.9" font-size="24.5" fill="#000" textLength="203.5" lengthAdjust="spacing" >0.90949 - 0.98082</text>
<text x="1901.5" y="477" font-size="21" fill="#000" textLength="58.5" lengthAdjust="spacing" >Medio</text>
<rect x="1560.3" y="497" width="73.5" height="37.5" fill="#e69800" stroke="#777" stroke-width="1"/>
<text x="1646" y="522.6" font-size="24.5" fill="#000" textLength="203.5" lengthAdjust="spacing" >0.98082 - 0.99603</text>
<text x="1901.5" y="528.3" font-size="21" fill="#000" textLength="36.5" lengthAdjust="spacing" >Alto</text>
<rect x="1560.3" y="546" width="73.5" height="37.5" fill="#e60000" stroke="#777" stroke-width="1"/>
<text x="1646" y="571.6" font-size="24.5" fill="#000" textLength="203.5" lengthAdjust="spacing" >0.99603 - 1.00000</text>
<text x="1901.5" y="576.4" font-size="21" fill="#000" textLength="202" lengthAdjust="spacing" >Máximo (Sin acceso)</text>
<text x="1538.5" y="630" font-size="22" fill="#000" font-weight="bold" textLength="86" lengthAdjust="spacing" >Cultivos</text>
<use href="#ico-n" x="1542.3" y="687.8" width="50" height="50"/>
<use href="#ico-m" x="1706.4" y="688.4" width="50" height="50"/>
<use href="#ico-o" x="1922.1" y="686.2" width="50" height="50"/>
<text x="1605.8" y="719.8" font-size="21" fill="#000" textLength="49" lengthAdjust="spacing" >Nuez</text>
<text x="1772.4" y="718.2" font-size="21" fill="#000" textLength="107.4" lengthAdjust="spacing" >Maíz grano</text>
<text x="1986.5" y="721.4" font-size="21" fill="#000" textLength="129.5" lengthAdjust="spacing" >Otros cultivos</text>
<text x="1538.5" y="839.4" font-size="22" fill="#000" font-weight="bold" textLength="78" lengthAdjust="spacing" >Fuente:</text>
<text x="1538.5" y="865" font-size="18.5" fill="#000" textLength="529.5" lengthAdjust="spacing" >-Elaboración propia con microdatos del cuestionario ampliado</text>
<text x="1543.3" y="886.5" font-size="18.5" fill="#000" textLength="179.5" lengthAdjust="spacing" >CENSO INEGI 2020.</text>
<text x="1538.5" y="909.9" font-size="18.5" fill="#000" textLength="543" lengthAdjust="spacing" >-Sistema de Información Agropecuaria y Pesquera (SIAP) 2019</text>
<rect x="1527" y="938.2" width="599" height="72.8" fill="#fff" stroke="#666" stroke-width="3"/>
<g fill="#e07a00"><rect x="1566.7" y="953.8" width="32" height="8.5"/><rect x="1577.5" y="953.8" width="10" height="38.4"/><rect x="1650" y="953.8" width="32" height="8.5"/></g><rect x="1661" y="962.3" width="10" height="29.9" fill="#f2bd84"/>
<g fill="none" stroke="#e07a00" stroke-width="3"><path d="M1610.5 992.2 V955.1 H1628 a11.5 11.5 0 0 1 0 23 H1617"/><path d="M1616 992.2 V960.3 H1628 a6.3 6.3 0 0 1 0 12.6 H1617"/></g>
<path d="M1572 999.4 H1676" stroke="#e3a86c" stroke-width="1.6" stroke-dasharray="2.2 1.1" opacity=".75"/>
<rect x="1736.2" y="952.2" width="36.2" height="31.4" rx="2.5" fill="#3f7fc4"/>
<path d="M1739 957 h12 l3 3 v6 h6 v-5 l5 -3 l4 4 v8 h-10 v5 h10 v5 h-22 v-9 h-8z" fill="#dbe8f6" opacity=".85"/>
<path d="M1745 968 h10 v12 h-10z M1758 972 h11 v3 h-11z" fill="#3f7fc4"/>
<text x="1736.2" y="997" font-size="13.5" font-weight="bold" fill="#2f6fb5" stroke="#2f6fb5" stroke-width=".4" textLength="36.5" lengthAdjust="spacingAndGlyphs">CIESAS</text>
<text x="1782" y="965.6" font-size="11.6" font-weight="bold" fill="#3a7cc0" textLength="123.4" lengthAdjust="spacingAndGlyphs">CENTRO DE INVESTIGACIONES</text>
<text x="1782" y="980.4" font-size="11.6" font-weight="bold" fill="#3a7cc0" textLength="100.5" lengthAdjust="spacingAndGlyphs">Y ESTUDIOS SUPERIORES</text>
<text x="1782" y="995.4" font-size="11.6" font-weight="bold" fill="#3a7cc0" textLength="111.6" lengthAdjust="spacingAndGlyphs">EN ANTROPOLOGÍA SOCIAL</text>
<path d="M1947 958 h9.5 l7 24 l4.2 -14.5 l-2.8 -9.5 h7.4 l7 24 l7 -24 h8.7 l-12 38.4 h-7.6 l-3.9 -13 l-3.9 13 h-7.6z" fill="#2d618f"/>
<path d="M1961.5 958 h7 l-3.3 10.5z" fill="#2d618f"/>
<rect x="2003" y="958" width="1.8" height="38.5" fill="#555"/>
<text x="2012.8" y="974.6" font-size="22" fill="#4d4d4d" font-weight="bold" textLength="73.7" lengthAdjust="spacing" >Wilson</text>
<text x="2012.8" y="995.5" font-size="22" fill="#4d4d4d" font-weight="bold" textLength="73" lengthAdjust="spacing" >Center</text>
<rect x="1847" y="1447" width="280" height="105" fill="#fff" stroke="#777" stroke-width="1"/>
<g fill="none" stroke="#000" stroke-linecap="butt"><path d="M1849.5 1488 A61.5 61.5 0 0 0 1974 1488" stroke-width="4.2"/><path d="M1856 1472 Q1900 1474 1951 1506" stroke-width="2.4"/><path d="M1856 1485 Q1900 1487 1940 1513" stroke-width="2.4"/><path d="M1856 1497 Q1896 1499 1928 1521" stroke-width="2.4"/><path d="M1901 1478 Q1912 1470 1925 1467" stroke-width="2.2"/><path d="M1915 1483 Q1932 1472 1957 1470" stroke-width="2.2"/><path d="M1930 1490 Q1945 1480 1966 1481" stroke-width="2.2"/><path d="M1869 1472 V1458 M1860 1472 H1878 M1869 1460 Q1862 1456 1861 1448 M1869 1460 Q1876 1456 1877 1448" stroke-width="1.8"/><path d="M1910.5 1471 V1458 M1910.5 1458 l-6 -4 M1910.5 1458 l6 -4 M1910.5 1458 l-3 -5 M1910.5 1458 l3 -5" stroke-width="1.8"/><path d="M1951.5 1470 V1458 M1944 1470 H1959 M1951.5 1459 Q1944 1456 1943 1448 M1951.5 1459 Q1959 1456 1960 1448" stroke-width="1.8"/></g>
<text x="1984.8" y="1471.4" font-size="17" fill="#111" textLength="135" lengthAdjust="spacingAndGlyphs">JORNALEROS EN</text>
<text x="1984" y="1493.2" font-size="17" fill="#111" textLength="138" lengthAdjust="spacingAndGlyphs">LA AGRICULTURA</text>
<text x="1979.2" y="1515.4" font-size="17" fill="#111" textLength="146.5" lengthAdjust="spacingAndGlyphs">DE EXPORTACIÓN</text>
<g stroke="#444" fill="none"><circle cx="126.5" cy="237.8" r="29.3" stroke-width="1.6"/><path d="M88.2 237.8 H164.4" stroke-width="1.2"/></g>
<path d="M126.5 201.3 L137.2 273.8 L126.5 267 L115.6 273.8Z" fill="#444"/>
<text x="125.8" y="198.5" font-size="14" fill="#333" text-anchor="middle" >N</text>
<path d="M96.4 1525.2 V1503.4 H172.7 V1524 H249.7 V1503.4 H401.1 V1525.2" fill="none" stroke="#454545" stroke-width="2.6"/>
<text x="95" y="1553" font-size="22" fill="#444" text-anchor="middle" >0</text>
<text x="171.6" y="1553" font-size="22" fill="#444" text-anchor="middle" >45</text>
<text x="247.8" y="1553" font-size="22" fill="#444" text-anchor="middle" >90</text>
<text x="400.7" y="1553" font-size="22" fill="#444" text-anchor="middle" >180</text>
<text x="408.6" y="1524" font-size="22" fill="#444" >Km</text>
<rect x="76.4" y="171.7" width="2067.1" height="1396.6" fill="none" stroke="#606060" stroke-width="3"/>
</svg></body></html>
